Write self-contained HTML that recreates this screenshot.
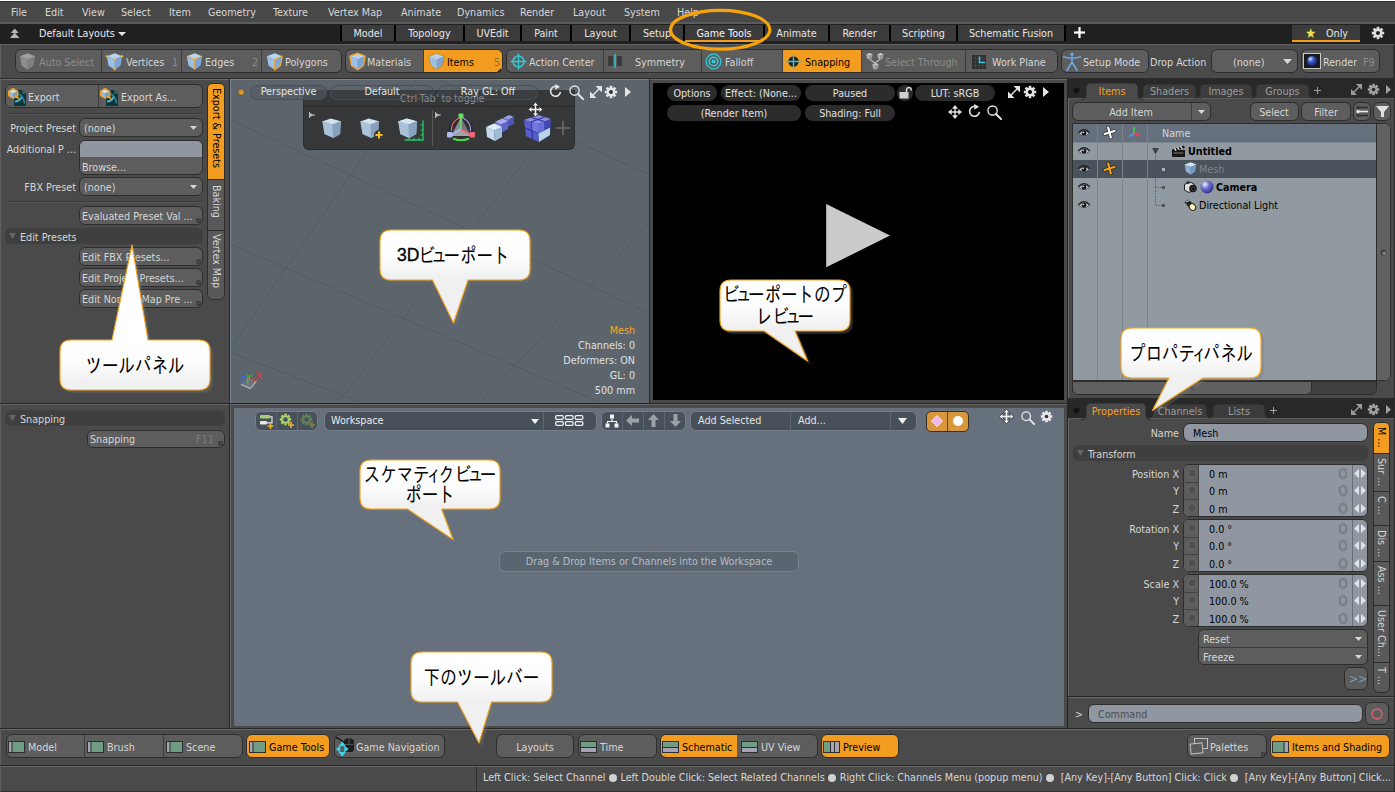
<!DOCTYPE html>
<html><head><meta charset="utf-8"><title>Modo Game Tools Layout</title>
<style>
html,body{margin:0;padding:0;background:#2b2b2b;}
body{width:1395px;height:792px;position:relative;overflow:hidden;font-family:"DejaVu Sans Condensed","Liberation Sans","Noto Sans CJK JP",sans-serif;font-size:10.7px;color:#d6d6d6;line-height:14px;}
div,span{position:absolute;box-sizing:border-box;white-space:nowrap;}
svg{position:absolute;overflow:visible;}
.t{height:14px;line-height:14px;}
.r{text-align:right;}
.c{text-align:center;}
.btn{background:#5d5d5d;border:1px solid #2d2d2d;border-radius:6px;}
.sep{width:1px;background:#3c3c3c;}
.or{background:#f29d1f;color:#000;}
.dim{color:#8c8c8c;}
.tab{top:25px;height:16px;background:#3b3b3b;color:#e6e6e6;text-align:center;line-height:18px;}
.fld{background:#9097a0;border:1px solid #2d2d2d;color:#000;}
.pill{background:rgba(84,92,98,.6);border:1px solid #485056;border-radius:7px;color:#e4e4e4;text-align:center;height:15px;line-height:12px;}
.ppill{background:#2c2c2c;border-radius:8px;color:#e0e0e0;text-align:center;height:16px;line-height:18px;}
.jp{font-family:"Liberation Sans","Noto Sans CJK JP",sans-serif;color:#000;font-size:16px;line-height:21px;text-align:center;font-weight:300;}
.co{background:linear-gradient(#ffffff 20%,#e9e9e9);border:1.5px solid #f0a21c;border-radius:10px;box-shadow:3px 3px 2px rgba(0,0,0,.35);}
</style></head><body>
<!-- MENU BAR -->
<div id="menubar" style="left:0px;top:0px;width:1395px;height:24px;background:#484848;border-top:1px solid #fff;border-bottom:2px solid #5c5c5c;"></div>
<div style="left:0px;top:1px;width:1395px;height:1px;background:#303030;"></div>
<span class="t" style="left:11px;top:6px;">File</span>
<span class="t" style="left:45px;top:6px;">Edit</span>
<span class="t" style="left:82px;top:6px;">View</span>
<span class="t" style="left:121px;top:6px;">Select</span>
<span class="t" style="left:169px;top:6px;">Item</span>
<span class="t" style="left:208px;top:6px;">Geometry</span>
<span class="t" style="left:273px;top:6px;">Texture</span>
<span class="t" style="left:328px;top:6px;">Vertex Map</span>
<span class="t" style="left:401px;top:6px;">Animate</span>
<span class="t" style="left:457px;top:6px;">Dynamics</span>
<span class="t" style="left:520px;top:6px;">Render</span>
<span class="t" style="left:573px;top:6px;">Layout</span>
<span class="t" style="left:624px;top:6px;">System</span>
<span class="t" style="left:677px;top:6px;">Help</span>
<!-- LAYOUT BAR -->
<div id="layoutbar" style="left:0px;top:24px;width:1395px;height:20px;background:#202020;"></div>
<svg style="left:10px;top:28px" width="10" height="10" viewBox="0 0 10 10"><polygon points="4.7,0.5 8.7,5 0.7,5" fill="#b4b4b4"/><polygon points="4.7,4.5 9.4,10 0,10" fill="#b4b4b4"/></svg>
<span class="t" style="left:39px;top:27px;color:#e8e8e8;">Default Layouts</span>
<svg style="left:118px;top:32px" width="8" height="4" viewBox="0 0 8 4"><polygon points="0,0 8,0 4.0,4" fill="#e8e8e8"/></svg>
<div style="left:340px;top:25px;width:726px;height:16px;background:#000;"></div>
<div class="tab" style="left:342px;top:25px;width:52px;height:16px;">Model</div>
<div class="tab" style="left:396px;top:25px;width:67px;height:16px;">Topology</div>
<div class="tab" style="left:465px;top:25px;width:55px;height:16px;">UVEdit</div>
<div class="tab" style="left:522px;top:25px;width:48px;height:16px;">Paint</div>
<div class="tab" style="left:572px;top:25px;width:57px;height:16px;">Layout</div>
<div class="tab" style="left:631px;top:25px;width:52px;height:16px;">Setup</div>
<div class="tab" style="left:685px;top:25px;width:78px;height:16px;height:17px;border-bottom:2px solid #f29d1f;color:#f4f4f4;">Game Tools</div>
<div class="tab" style="left:765px;top:25px;width:63px;height:16px;">Animate</div>
<div class="tab" style="left:830px;top:25px;width:59px;height:16px;">Render</div>
<div class="tab" style="left:891px;top:25px;width:65px;height:16px;">Scripting</div>
<div class="tab" style="left:958px;top:25px;width:106px;height:16px;">Schematic Fusion</div>
<svg style="left:1073.5px;top:27px" width="11" height="11" viewBox="0 0 11 11"><rect x="4.4" y="0" width="2.2" height="11" fill="#fff"/><rect x="0" y="4.4" width="11" height="2.2" fill="#fff"/></svg>
<div class="tab" style="left:1292px;top:25px;width:68px;height:17px;border-bottom:2px solid #f29d1f;height:17px;text-align:left;padding-left:34px;line-height:18px;">Only</div>
<span class="t" style="left:1305px;top:26px;color:#ecdf52;font-size:14px;">★</span>
<svg style="left:1371px;top:26px" width="14" height="14" viewBox="0 0 14 14"><g transform="translate(7,7)"><circle r="4.4" fill="#e0e0e0"/><rect x="-1.3" y="-6.2" width="2.6" height="3" fill="#e0e0e0" transform="rotate(0)"/><rect x="-1.3" y="-6.2" width="2.6" height="3" fill="#e0e0e0" transform="rotate(45)"/><rect x="-1.3" y="-6.2" width="2.6" height="3" fill="#e0e0e0" transform="rotate(90)"/><rect x="-1.3" y="-6.2" width="2.6" height="3" fill="#e0e0e0" transform="rotate(135)"/><rect x="-1.3" y="-6.2" width="2.6" height="3" fill="#e0e0e0" transform="rotate(180)"/><rect x="-1.3" y="-6.2" width="2.6" height="3" fill="#e0e0e0" transform="rotate(225)"/><rect x="-1.3" y="-6.2" width="2.6" height="3" fill="#e0e0e0" transform="rotate(270)"/><rect x="-1.3" y="-6.2" width="2.6" height="3" fill="#e0e0e0" transform="rotate(315)"/><circle r="1.98" fill="#1e1e1e"/></g></svg>
<!-- TOOLBAR -->
<div id="toolbar" style="left:0px;top:44px;width:1395px;height:34px;background:#4a4a4a;border-top:1px solid #626262;border-left:1px solid #5e5e5e;"></div>
<div style="left:1393px;top:45px;width:2px;height:33px;background:#333;"></div>
<div style="left:0px;top:78px;width:1395px;height:3px;background:#2c2c2c;"></div>
<div class="btn" style="left:15px;top:49px;width:327px;height:24px;"></div>
<div class="sep" style="left:101px;top:50px;width:1px;height:22px;"></div>
<div class="sep" style="left:181px;top:50px;width:1px;height:22px;"></div>
<div class="sep" style="left:261px;top:50px;width:1px;height:22px;"></div>
<svg style="left:19px;top:53px" width="17" height="17" viewBox="0 0 17 17"><g opacity="0.8"><polygon points="0.8,3.2 8.7,0.3 16.2,3.2 8.8,6.5" fill="#b0b0b0"/><polygon points="0.8,3.2 8.8,6.5 8.8,16.7 2.5,12.5" fill="#9a9a9a"/><polygon points="8.8,6.5 16.2,3.2 14.6,12.5 8.8,16.7" fill="#8a8a8a"/></g></svg>
<span class="t dim" style="left:39px;top:56px;">Auto Select</span>
<svg style="left:106px;top:53px" width="17" height="17" viewBox="0 0 17 17"><g opacity="1"><polygon points="0.8,3.2 8.7,0.3 16.2,3.2 8.8,6.5" fill="#b9d3ef"/><polygon points="0.8,3.2 8.8,6.5 8.8,16.7 2.5,12.5" fill="#9cc0ea"/><polygon points="8.8,6.5 16.2,3.2 14.6,12.5 8.8,16.7" fill="#7ba6d6"/><circle cx="0.9" cy="3.3" r="1.2" fill="#f5a623"/><circle cx="16.1" cy="3.3" r="1.2" fill="#f5a623"/><circle cx="8.8" cy="6.6" r="1.2" fill="#f5a623"/><circle cx="8.8" cy="16.3" r="1.2" fill="#f5a623"/></g></svg>
<span class="t" style="left:126px;top:56px;">Vertices</span>
<span class="t dim" style="left:172px;top:56px;">1</span>
<svg style="left:186px;top:53px" width="17" height="17" viewBox="0 0 17 17"><g opacity="1"><polygon points="0.8,3.2 8.7,0.3 16.2,3.2 8.8,6.5" fill="#b9d3ef"/><polygon points="0.8,3.2 8.8,6.5 8.8,16.7 2.5,12.5" fill="#9cc0ea"/><polygon points="8.8,6.5 16.2,3.2 14.6,12.5 8.8,16.7" fill="#7ba6d6"/><path d="M0.8,3.2 L8.8,6.5 L16.2,3.2 M8.8,6.5 L8.8,16.7" stroke="#f5a623" stroke-width="1" fill="none"/></g></svg>
<span class="t" style="left:205px;top:56px;">Edges</span>
<span class="t dim" style="left:252px;top:56px;">2</span>
<svg style="left:266px;top:53px" width="17" height="17" viewBox="0 0 17 17"><g opacity="1"><polygon points="0.8,3.2 8.7,0.3 16.2,3.2 8.8,6.5" fill="#b9d3ef"/><polygon points="0.8,3.2 8.8,6.5 8.8,16.7 2.5,12.5" fill="#9cc0ea"/><polygon points="8.8,6.5 16.2,3.2 14.6,12.5 8.8,16.7" fill="#7ba6d6"/><polygon points="8.8,6.5 16.2,3.2 14.6,12.5 8.8,16.7" fill="none" stroke="#f5a623" stroke-width="1.2"/></g></svg>
<span class="t" style="left:285px;top:56px;">Polygons</span>
<div class="btn" style="left:345px;top:49px;width:158px;height:24px;"></div>
<div class="or" style="left:424px;top:50px;width:78px;height:22px;border-radius:0 5px 5px 0;"></div>
<div class="sep" style="left:423px;top:50px;width:1px;height:22px;"></div>
<svg style="left:349px;top:53px" width="17" height="17" viewBox="0 0 17 17"><g opacity="1"><polygon points="0.8,3.2 8.7,0.3 16.2,3.2 8.8,6.5" fill="#b9d3ef"/><polygon points="0.8,3.2 8.8,6.5 8.8,16.7 2.5,12.5" fill="#9cc0ea"/><polygon points="8.8,6.5 16.2,3.2 14.6,12.5 8.8,16.7" fill="#7ba6d6"/><polygon points="0.8,3.2 8.7,0.3 16.2,3.2 14.6,12.5 8.8,16.7 2.5,12.5" fill="none" stroke="#f5a623" stroke-width="1.3"/></g></svg>
<span class="t" style="left:367px;top:56px;">Materials</span>
<svg style="left:428px;top:53px" width="17" height="17" viewBox="0 0 17 17"><g opacity="1"><polygon points="0.8,3.2 8.7,0.3 16.2,3.2 8.8,6.5" fill="#b9d3ef"/><polygon points="0.8,3.2 8.8,6.5 8.8,16.7 2.5,12.5" fill="#9cc0ea"/><polygon points="8.8,6.5 16.2,3.2 14.6,12.5 8.8,16.7" fill="#7ba6d6"/><polygon points="0.8,3.2 8.7,0.3 16.2,3.2 14.6,12.5 8.8,16.7 2.5,12.5" fill="none" stroke="#d08a1a" stroke-width="1"/></g></svg>
<span class="t" style="left:447px;top:56px;color:#000;">Items</span>
<span class="t" style="left:494px;top:56px;color:#9a6a1a;">5</span>
<svg style="left:497px;top:68px" width="4" height="4" viewBox="0 0 4 4"><polygon points="4,0 4,4 0,4" fill="#3a2a10"/></svg>
<div class="btn" style="left:506px;top:49px;width:552px;height:24px;"></div>
<div class="sep" style="left:603px;top:50px;width:1px;height:22px;"></div>
<div class="sep" style="left:701px;top:50px;width:1px;height:22px;"></div>
<div class="sep" style="left:782px;top:50px;width:1px;height:22px;"></div>
<div class="sep" style="left:861px;top:50px;width:1px;height:22px;"></div>
<div class="sep" style="left:965px;top:50px;width:1px;height:22px;"></div>
<div class="or" style="left:783px;top:50px;width:78px;height:22px;"></div>
<svg style="left:510px;top:53px" width="17" height="17" viewBox="0 0 17 17"><circle cx="8.5" cy="8.5" r="5.5" fill="none" stroke="#35c8d8" stroke-width="1.5"/><path d="M8.5,0.5V16.5M0.5,8.5H16.5" stroke="#35c8d8" stroke-width="1.3"/></svg>
<span class="t" style="left:529px;top:56px;">Action Center</span>
<svg style="left:608px;top:54px" width="16" height="14" viewBox="0 0 16 14"><rect x="0" y="2" width="5" height="10" fill="#3a3a3a"/><rect x="9" y="2" width="5" height="10" fill="#3a3a3a"/><rect x="6.3" y="0" width="1.4" height="14" fill="#35c8d8"/></svg>
<span class="t" style="left:635px;top:56px;">Symmetry</span>
<svg style="left:705px;top:53px" width="17" height="17" viewBox="0 0 17 17"><circle cx="8.5" cy="8.5" r="7.3" fill="none" stroke="#35c8d8" stroke-width="1.2"/><circle cx="8.5" cy="8.5" r="4.3" fill="none" stroke="#35c8d8" stroke-width="1.6"/><circle cx="8.5" cy="8.5" r="2" fill="#35c8d8"/></svg>
<span class="t" style="left:725px;top:56px;">Falloff</span>
<svg style="left:785px;top:53px" width="17" height="17" viewBox="0 0 17 17"><circle cx="8.5" cy="8.5" r="5.2" fill="#222"/><path d="M8.5,0.5V16.5M0.5,8.5H16.5" stroke="#35c8d8" stroke-width="1.4"/></svg>
<span class="t" style="left:805px;top:56px;color:#000;">Snapping</span>
<svg style="left:866px;top:53px" width="7" height="7" viewBox="0 0 17 17"><g opacity="1"><polygon points="0.8,3.2 8.7,0.3 16.2,3.2 8.8,6.5" fill="#d0d0d0"/><polygon points="0.8,3.2 8.8,6.5 8.8,16.7 2.5,12.5" fill="#b0b0b0"/><polygon points="8.8,6.5 16.2,3.2 14.6,12.5 8.8,16.7" fill="#989898"/></g></svg>
<svg style="left:877px;top:53px" width="7" height="7" viewBox="0 0 17 17"><g opacity="1"><polygon points="0.8,3.2 8.7,0.3 16.2,3.2 8.8,6.5" fill="#d0d0d0"/><polygon points="0.8,3.2 8.8,6.5 8.8,16.7 2.5,12.5" fill="#b0b0b0"/><polygon points="8.8,6.5 16.2,3.2 14.6,12.5 8.8,16.7" fill="#989898"/></g></svg>
<svg style="left:871.5px;top:63px" width="7" height="7" viewBox="0 0 17 17"><g opacity="1"><polygon points="0.8,3.2 8.7,0.3 16.2,3.2 8.8,6.5" fill="#d0d0d0"/><polygon points="0.8,3.2 8.8,6.5 8.8,16.7 2.5,12.5" fill="#b0b0b0"/><polygon points="8.8,6.5 16.2,3.2 14.6,12.5 8.8,16.7" fill="#989898"/></g></svg>
<svg style="left:866px;top:52px" width="19" height="18" viewBox="0 0 19 18"><path d="M4,7.5 L9,11 L14,7.5 M9,11V13" stroke="#b8b8b8" stroke-width="1.2" fill="none"/></svg>
<span class="t dim" style="left:885px;top:56px;">Select Through</span>
<svg style="left:972px;top:55px" width="14" height="14" viewBox="0 0 15 15"><rect x="0" y="0" width="15" height="15" fill="#2e2e2e"/><path d="M0,3.75H15M0,7.5H15M0,11.25H15M3.75,0V15M7.5,0V15M11.25,0V15" stroke="#4a4a4a" stroke-width=".7"/><path d="M8,1.5V8H14" stroke="#35c8d8" stroke-width="1.6" fill="none"/></svg>
<span class="t" style="left:992px;top:56px;">Work Plane</span>
<div class="btn" style="left:1061px;top:49px;width:88px;height:24px;"></div>
<svg style="left:1063px;top:52px" width="18" height="19" viewBox="0 0 18 19"><circle cx="9" cy="2.2" r="1.7" fill="#6aa8e8"/><path d="M0.5,5 L9,6.5 L17.5,5 M9,5 V10 M9,10 L4,18.5 M9,10 L14,18.5" stroke="#6aa8e8" stroke-width="1.6" fill="none" stroke-linecap="round"/></svg>
<span class="t" style="left:1083px;top:56px;">Setup Mode</span>
<span class="t" style="left:1150px;top:56px;">Drop Action</span>
<div class="btn" style="left:1211px;top:49px;width:87px;height:24px;"></div>
<span class="t" style="left:1233px;top:56px;">(none)</span>
<svg style="left:1283px;top:59px" width="9" height="5" viewBox="0 0 9 5"><polygon points="0,0 9,0 4.5,5" fill="#d8d8d8"/></svg>
<div class="btn" style="left:1301px;top:49px;width:79px;height:24px;"></div>
<svg style="left:1303px;top:53px" width="18" height="16" viewBox="0 0 18 16"><defs><radialGradient id="sph" cx=".35" cy=".3" r=".8"><stop offset="0" stop-color="#dfe8ff"/><stop offset=".35" stop-color="#3a5fd0"/><stop offset="1" stop-color="#0a1a60"/></radialGradient></defs><rect x=".5" y=".5" width="17" height="15" fill="#1a1a1a" stroke="#c8c8c8" stroke-width="1"/><circle cx="9" cy="8" r="5" fill="url(#sph)"/></svg>
<span class="t" style="left:1323px;top:56px;">Render</span>
<span class="t dim" style="left:1363px;top:56px;">F9</span>
<svg style="left:660px;top:0px" width="120" height="56" viewBox="0 0 120 56"><ellipse cx="60.2" cy="29.8" rx="49.7" ry="19.4" fill="none" stroke="#f7a30c" stroke-width="3.2"/></svg>
<!-- LEFT TOOL PANEL -->
<div id="leftpanel" style="left:0px;top:79px;width:229px;height:324px;background:#4a4a4a;border-left:1px solid #606060;border-top:1px solid #686868;"></div>
<div style="left:229px;top:79px;width:1px;height:324px;background:#262626;"></div>
<div style="left:0px;top:403px;width:1395px;height:1px;background:#262626;"></div>
<div class="btn" style="left:5px;top:84px;width:198px;height:24px;"></div>
<div class="sep" style="left:98px;top:85px;width:1px;height:22px;"></div>
<svg style="left:8px;top:86px" width="19" height="20" viewBox="0 0 19 20"><polygon points="6,4 14,4 18,8 18,20 6,20" fill="#0e343c"/><polygon points="14,4 18,8 14,8" fill="#2c5c66"/><path d="M11,8 Q16,11 16.5,17.5" stroke="#2b8896" stroke-width="1.5" fill="none"/><path d="M7,15.5 Q11.5,15.5 13.5,11" stroke="#46b4c6" stroke-width="1.9" fill="none"/><polygon points="0,5 5,1.8 10.5,5 10.5,10 5,13 0,10" fill="#f5a01e"/><polygon points="7,11.5 11.5,13.5 9.5,8.5" fill="#f5a01e"/><polygon points="1.6,5.5 5,3.8 8.9,5.5 5,7.3" fill="#d2e2f2"/><polygon points="1.6,5.5 5,7.3 5,11.4 1.6,9.5" fill="#9ab8d8"/><polygon points="5,7.3 8.9,5.5 8.9,9.5 5,11.4" fill="#7c9ec2"/></svg>
<span class="t" style="left:28px;top:91px;">Export</span>
<svg style="left:100px;top:86px" width="19" height="20" viewBox="0 0 19 20"><polygon points="6,4 14,4 18,8 18,20 6,20" fill="#0e343c"/><polygon points="14,4 18,8 14,8" fill="#2c5c66"/><path d="M11,8 Q16,11 16.5,17.5" stroke="#2b8896" stroke-width="1.5" fill="none"/><path d="M7,15.5 Q11.5,15.5 13.5,11" stroke="#46b4c6" stroke-width="1.9" fill="none"/><polygon points="0,5 5,1.8 10.5,5 10.5,10 5,13 0,10" fill="#f5a01e"/><polygon points="7,11.5 11.5,13.5 9.5,8.5" fill="#f5a01e"/><polygon points="1.6,5.5 5,3.8 8.9,5.5 5,7.3" fill="#d2e2f2"/><polygon points="1.6,5.5 5,7.3 5,11.4 1.6,9.5" fill="#9ab8d8"/><polygon points="5,7.3 8.9,5.5 8.9,9.5 5,11.4" fill="#7c9ec2"/></svg>
<span class="t" style="left:121px;top:91px;">Export As...</span>
<div style="left:9px;top:113px;width:193px;height:1px;background:#383838;"></div>
<div style="left:9px;top:114px;width:193px;height:1px;background:#565656;"></div>
<span class="t r" style="left:-124px;width:200px;top:122px;">Project Preset</span>
<div class="btn" style="left:79px;top:118px;width:124px;height:19px;"></div>
<span class="t" style="left:84px;top:122px;">(none)</span>
<svg style="left:190px;top:125.5px" width="7" height="4" viewBox="0 0 7 4"><polygon points="0,0 7,0 3.5,4" fill="#d4d4d4"/></svg>
<span class="t r" style="left:-124px;width:200px;top:143px;">Additional P ...</span>
<div class="btn" style="left:79px;top:140px;width:124px;height:35px;overflow:hidden;"><div style="left:0;top:0;width:124px;height:16px;background:#9097a0;"></div></div>
<span class="t" style="left:82px;top:161px;">Browse...</span>
<span class="t r" style="left:-124px;width:200px;top:181px;">FBX Preset</span>
<div class="btn" style="left:79px;top:177px;width:124px;height:19px;"></div>
<span class="t" style="left:84px;top:181px;">(none)</span>
<svg style="left:190px;top:184.5px" width="7" height="4" viewBox="0 0 7 4"><polygon points="0,0 7,0 3.5,4" fill="#d4d4d4"/></svg>
<div style="left:9px;top:201px;width:193px;height:1px;background:#383838;"></div>
<div style="left:9px;top:202px;width:193px;height:1px;background:#565656;"></div>
<div class="btn" style="left:79px;top:206px;width:124px;height:19px;"></div>
<span class="t" style="left:82px;top:210px;">Evaluated Preset Val ...</span>
<svg style="left:197px;top:219px" width="3" height="3" viewBox="0 0 3 3"><rect x="0" y="0" width="3" height="3" fill="none" stroke="#2a2a2a" stroke-width="1"/></svg>
<div style="left:5px;top:228px;width:198px;height:16px;background:#3f3f3f;border-radius:6px;"></div>
<svg style="left:9px;top:233px" width="7" height="6" viewBox="0 0 7 6"><polygon points="0,0 7,0 3.5,6" fill="#666"/></svg>
<span class="t" style="left:20px;top:231px;">Edit Presets</span>
<div class="btn" style="left:79px;top:247px;width:124px;height:19px;"></div>
<span class="t" style="left:82px;top:251px;">Edit FBX Presets...</span>
<svg style="left:197px;top:260px" width="3" height="3" viewBox="0 0 3 3"><rect x="0" y="0" width="3" height="3" fill="none" stroke="#2a2a2a" stroke-width="1"/></svg>
<div class="btn" style="left:79px;top:268px;width:124px;height:19px;"></div>
<span class="t" style="left:82px;top:272px;">Edit Project Presets...</span>
<svg style="left:197px;top:281px" width="3" height="3" viewBox="0 0 3 3"><rect x="0" y="0" width="3" height="3" fill="none" stroke="#2a2a2a" stroke-width="1"/></svg>
<div class="btn" style="left:79px;top:289px;width:124px;height:19px;"></div>
<span class="t" style="left:82px;top:293px;">Edit Normal Map Pre ...</span>
<svg style="left:197px;top:302px" width="3" height="3" viewBox="0 0 3 3"><rect x="0" y="0" width="3" height="3" fill="none" stroke="#2a2a2a" stroke-width="1"/></svg>
<div style="left:207px;top:83px;width:18px;height:97px;background:#f29d1f;border:1px solid #2d2d2d;border-radius:5px 5px 0 0;"></div>
<span style="left:223px;top:88px;transform-origin:0 0;transform:rotate(90deg);color:#000;height:14px;line-height:14px;">Export &amp; Presets</span>
<div style="left:207px;top:179px;width:18px;height:52px;background:#595959;border:1px solid #2d2d2d;border-radius:0;"></div>
<span style="left:223px;top:185px;transform-origin:0 0;transform:rotate(90deg);color:#d6d6d6;height:14px;line-height:14px;">Baking</span>
<div style="left:207px;top:230px;width:18px;height:70px;background:#595959;border:1px solid #2d2d2d;border-radius:0 0 6px 6px;"></div>
<span style="left:223px;top:234px;transform-origin:0 0;transform:rotate(90deg);color:#d6d6d6;height:14px;line-height:14px;">Vertex Map</span>
<!-- SNAPPING PANEL -->
<div id="snappanel" style="left:0px;top:404px;width:229px;height:324px;background:#4a4a4a;border-left:1px solid #606060;border-top:1px solid #686868;"></div>
<div style="left:229px;top:404px;width:1px;height:324px;background:#262626;"></div>
<div style="left:5px;top:410px;width:220px;height:16px;background:#3f3f3f;border-radius:6px;"></div>
<svg style="left:9px;top:415px" width="7" height="6" viewBox="0 0 7 6"><polygon points="0,0 7,0 3.5,6" fill="#666"/></svg>
<span class="t" style="left:20px;top:413px;">Snapping</span>
<div class="btn" style="left:87px;top:430px;width:138px;height:18px;"></div>
<span class="t" style="left:90px;top:433px;">Snapping</span>
<span class="t dim" style="left:196px;top:433px;color:#7a7a7a;">F11</span>
<svg style="left:219px;top:442px" width="3" height="3" viewBox="0 0 3 3"><rect x="0" y="0" width="3" height="3" fill="none" stroke="#2a2a2a" stroke-width="1"/></svg>
<!-- 3D VIEWPORT -->
<div id="view3d" style="left:230px;top:79px;width:419px;height:324px;background:#5c656c;border-left:1px solid #7a8791;border-top:1px solid #7a8791;overflow:hidden;"><svg style="left:0;top:0" width="419" height="324" viewBox="230 79 419 324"><g stroke="#525c63" stroke-width="1" fill="none"><path d="M230,119 L650,313"/><path d="M230,243.6 L603,403"/><path d="M230,351.6 L364,403"/><path d="M440,79 L650,174.6"/><path d="M230,347 L415,79"/><path d="M336,403 L586,79"/><path d="M477.5,403 L650,220.7"/><path d="M618.5,403 L650,377.5"/></g></svg></div>
<div style="left:649px;top:79px;width:3px;height:324px;background:#4a4a4a;border-left:1px solid #262626;border-right:1px solid #262626;"></div>
<svg style="left:237px;top:88px" width="8" height="8" viewBox="0 0 8 8"><defs><radialGradient id="od" cx=".6" cy=".6" r=".7"><stop offset="0" stop-color="#f5a623"/><stop offset="1" stop-color="#8a6a30"/></radialGradient></defs><circle cx="4" cy="4" r="3.5" fill="url(#od)" stroke="#4a5258" stroke-width=".8"/></svg>
<div style="left:303px;top:90px;width:272px;height:60px;background:rgba(52,52,54,.94);border-radius:0 0 6px 6px;border:1px solid #2c2c2e;border-top:none;"></div>
<div style="left:304px;top:106px;width:270px;height:1px;background:#2a2a2a;"></div>
<span class="t" style="left:400px;top:92px;color:#8f959a;">Ctrl-Tab' to toggle</span>
<div class="pill" style="left:250px;top:85px;width:77px;height:15px;">Perspective</div>
<div class="pill" style="left:330px;top:85px;width:104px;height:15px;background:rgba(90,98,104,.18);border-color:rgba(70,78,84,.8);">Default</div>
<div class="pill" style="left:438px;top:85px;width:100px;height:15px;background:rgba(90,98,104,.18);border-color:rgba(70,78,84,.8);">Ray GL: Off</div>
<svg style="left:309px;top:112px" width="6" height="6" viewBox="0 0 6 6"><rect x="0" y="0" width="1" height="6" fill="#b8b8b8"/><polygon points="1,1 5,3 1,5" fill="#b8b8b8"/><rect x="4" y="2.5" width="2" height="1" fill="#b8b8b8"/></svg>
<svg style="left:435px;top:112px" width="6" height="6" viewBox="0 0 6 6"><rect x="0" y="0" width="1" height="6" fill="#b8b8b8"/><polygon points="1,1 5,3 1,5" fill="#b8b8b8"/><rect x="4" y="2.5" width="2" height="1" fill="#b8b8b8"/></svg>
<svg style="left:322px;top:118px" width="20" height="20" viewBox="0 0 20 20"><g stroke-linejoin="round" stroke-width="1.2"><polygon points="1,3.8 8.5,1.2 18.5,3.8 11,6.8" fill="#d6e4f1" stroke="#d6e4f1"/><polygon points="1,3.8 11,6.8 11.5,19.5 3,15.8" fill="#a9c1d9" stroke="#a9c1d9"/><polygon points="11,6.8 18.5,3.8 17.7,15.8 11.5,19.5" fill="#88a2be" stroke="#88a2be"/></g></svg>
<svg style="left:360px;top:118px" width="20" height="20" viewBox="0 0 20 20"><g stroke-linejoin="round" stroke-width="1.2"><polygon points="1,3.8 8.5,1.2 18.5,3.8 11,6.8" fill="#d6e4f1" stroke="#d6e4f1"/><polygon points="1,3.8 11,6.8 11.5,19.5 3,15.8" fill="#a9c1d9" stroke="#a9c1d9"/><polygon points="11,6.8 18.5,3.8 17.7,15.8 11.5,19.5" fill="#88a2be" stroke="#88a2be"/></g></svg>
<svg style="left:398px;top:118px" width="20" height="20" viewBox="0 0 20 20"><g stroke-linejoin="round" stroke-width="1.2"><polygon points="1,3.8 8.5,1.2 18.5,3.8 11,6.8" fill="#d6e4f1" stroke="#d6e4f1"/><polygon points="1,3.8 11,6.8 11.5,19.5 3,15.8" fill="#a9c1d9" stroke="#a9c1d9"/><polygon points="11,6.8 18.5,3.8 17.7,15.8 11.5,19.5" fill="#88a2be" stroke="#88a2be"/></g></svg>
<svg style="left:374px;top:130px" width="10" height="10" viewBox="0 0 10 10"><circle cx="5" cy="5" r="5" fill="#38393b"/><path d="M5,1.5V8.5M1.5,5H8.5" stroke="#f5c020" stroke-width="2"/></svg>
<svg style="left:404px;top:120px" width="20" height="21" viewBox="0 0 20 21"><path d="M19,0.5V20H0.5" stroke="#1fd060" stroke-width="1.3" fill="none"/><path d="M16.5,5H19M16.5,10H19M16.5,15H19M5,17.5V20M10,17.5V20M15,17.5V20" stroke="#1fd060" stroke-width="1"/></svg>
<svg style="left:398px;top:118px" width="20" height="20" viewBox="0 0 20 20"><g stroke-linejoin="round" stroke-width="1.2"><polygon points="1,3.8 8.5,1.2 18.5,3.8 11,6.8" fill="#d6e4f1" stroke="#d6e4f1"/><polygon points="1,3.8 11,6.8 11.5,19.5 3,15.8" fill="#a9c1d9" stroke="#a9c1d9"/><polygon points="11,6.8 18.5,3.8 17.7,15.8 11.5,19.5" fill="#88a2be" stroke="#88a2be"/></g></svg>
<div style="left:432px;top:110px;width:1px;height:36px;background:#5a5a5a;"></div>
<svg style="left:446px;top:113px" width="30" height="30" viewBox="0 0 30 30"><circle cx="15" cy="17" r="12.5" fill="#2e2e30"/><polygon points="15,16 5,23 15,4" fill="#9a9ea4" opacity=".85"/><polygon points="15,16 25,23 15,4" fill="#7c8086" opacity=".85"/><polygon points="15,16 5,23 25,23" fill="#b4b8bc" opacity=".85"/><path d="M15,16V5" stroke="#6ae06a" stroke-width="1.6"/><rect x="12.5" y="0.5" width="5" height="5" rx="1" fill="#6ae06a"/><path d="M15,16L25,22" stroke="#f0687a" stroke-width="1.6"/><rect x="23.5" y="19" width="5.5" height="5.5" rx="1" fill="#f0687a"/><path d="M15,16L5,22" stroke="#b0b4f4" stroke-width="1.6"/><rect x="1" y="19" width="5.5" height="5.5" rx="1" fill="#b4b8f6"/><path d="M7,25.5 Q15,29 23,25.5" stroke="#4ad84a" stroke-width="2" fill="none"/><path d="M5.5,18 Q5,9 13,5" stroke="#f0687a" stroke-width="1.1" fill="none"/><path d="M24.5,18 Q25,9 17,5" stroke="#9ca4f0" stroke-width="1.1" fill="none"/></svg>
<svg style="left:485px;top:114px" width="30" height="28" viewBox="0 0 30 28"><g><polygon points="18,4 24,1 29,3 23,6" fill="#9a9ee8"/><polygon points="18,4 23,6 23,13 18,11" fill="#6a6ed0"/><polygon points="23,6 29,3 29,10 23,13" fill="#5054b8"/><polygon points="10,8 17,4.5 23,7 16,10.5" fill="#a8acf0"/><polygon points="10,8 16,10.5 16,19 10,16" fill="#7a7ed8"/><polygon points="16,10.5 23,7 23,15 16,19" fill="#6064c4"/><polygon points="1,13 9,9.5 17,13 9,16.5" fill="#dcecfa"/><polygon points="1,13 9,16.5 10,27 2,23" fill="#c4daf0"/><polygon points="9,16.5 17,13 17,23 10,27" fill="#a0bcd8"/></g></svg>
<svg style="left:524px;top:115px" width="28" height="28" viewBox="0 0 28 28"><polygon points="0,5 14,0 27,4 14,9" fill="#8a8ee4"/><polygon points="0,5 14,9 15,27 2,21" fill="#5a5ecc"/><polygon points="14,9 27,4 26,20 15,27" fill="#4448b0"/><path d="M7,2.5L20.5,6.5M20.5,2L7,7M1,13L14.5,18L26.5,12M7.5,7L8.5,24M20.5,6.5L20.5,23.5" stroke="#3034a0" stroke-width="1.2" fill="none"/><polygon points="14.5,18.5 26,12.5 26,20 15,27" fill="#b8d4ec"/><polygon points="14,9 20.5,6.5 20.5,15 14.5,18.5" fill="#6a6ed8"/><polygon points="8,7 14,9 14.5,18 8.3,15.5" fill="#7478dc"/></svg>
<svg style="left:556px;top:121px" width="14" height="14" viewBox="0 0 14 14"><path d="M7,0V14M0,7H14" stroke="#6e6e6e" stroke-width="1.6"/></svg>
<svg style="left:527.5px;top:101.5px" width="15" height="15" viewBox="0 0 14 14"><g fill="#f4f4f4" stroke="#222" stroke-width="0.7"><polygon points="7,0 10,3.7 4,3.7"/><polygon points="7,14 10,10.3 4,10.3"/><polygon points="0,7 3.7,4 3.7,10"/><polygon points="14,7 10.3,4 10.3,10"/><rect x="6.3" y="3" width="1.4" height="8" stroke="none"/><rect x="3" y="6.3" width="8" height="1.4" stroke="none"/></g></svg>
<svg style="left:548.0px;top:84.0px" width="15" height="15" viewBox="0 0 14 14"><path d="M9.8,3.2 A4.6,4.6 0 1 0 11.6,7.4" fill="none" stroke="#e4e4e4" stroke-width="1.5"/><polygon points="6.8,0 11.2,2.6 6.8,5.4" fill="#e4e4e4"/></svg>
<svg style="left:569.0px;top:84.5px" width="15" height="15" viewBox="0 0 14 14"><circle cx="5.2" cy="5.2" r="4.3" fill="none" stroke="#e4e4e4" stroke-width="1.3"/><line x1="8.4" y1="8.4" x2="13.2" y2="13.2" stroke="#e4e4e4" stroke-width="1.9" stroke-linecap="round"/></svg>
<svg style="left:590.0px;top:86.0px" width="12" height="12" viewBox="0 0 12 12"><g fill="#e4e4e4" stroke="#e4e4e4"><polygon points="12,0 12,6.5 5.5,0" stroke="none"/><polygon points="0,12 0,5.5 6.5,12" stroke="none"/><line x1="2.5" y1="9.5" x2="9.5" y2="2.5" stroke-width="1.5"/></g></svg>
<svg style="left:603.5px;top:85px" width="14" height="14" viewBox="0 0 14 14"><g transform="translate(7,7)"><circle r="4.4" fill="#e4e4e4"/><rect x="-1.3" y="-6.2" width="2.6" height="3" fill="#e4e4e4" transform="rotate(0)"/><rect x="-1.3" y="-6.2" width="2.6" height="3" fill="#e4e4e4" transform="rotate(45)"/><rect x="-1.3" y="-6.2" width="2.6" height="3" fill="#e4e4e4" transform="rotate(90)"/><rect x="-1.3" y="-6.2" width="2.6" height="3" fill="#e4e4e4" transform="rotate(135)"/><rect x="-1.3" y="-6.2" width="2.6" height="3" fill="#e4e4e4" transform="rotate(180)"/><rect x="-1.3" y="-6.2" width="2.6" height="3" fill="#e4e4e4" transform="rotate(225)"/><rect x="-1.3" y="-6.2" width="2.6" height="3" fill="#e4e4e4" transform="rotate(270)"/><rect x="-1.3" y="-6.2" width="2.6" height="3" fill="#e4e4e4" transform="rotate(315)"/><circle r="1.98" fill="#2c3238"/></g></svg>
<svg style="left:624.5px;top:87.0px" width="6" height="10" viewBox="0 0 6 10"><polygon points="0,0 6,5.0 0,10" fill="#e4e4e4"/></svg>
<span class="t r" style="left:435px;width:200px;top:324px;color:#f5a623;">Mesh</span>
<span class="t r" style="left:435px;width:200px;top:339px;color:#e0e0e0;">Channels: 0</span>
<span class="t r" style="left:435px;width:200px;top:354px;color:#e0e0e0;">Deformers: ON</span>
<span class="t r" style="left:435px;width:200px;top:369px;color:#e0e0e0;">GL: 0</span>
<span class="t r" style="left:435px;width:200px;top:384px;color:#e0e0e0;">500 mm</span>
<svg style="left:240px;top:371px" width="24" height="19" viewBox="0 0 24 19"><polygon points="1,13.5 7.5,6 16.5,10 10.5,17.5" fill="#6c757c"/><path d="M1,13.5 L10.5,17.5 L16.5,10" stroke="#cfcfcf" stroke-width="1" fill="none"/><path d="M7.5,6 L16.5,10" stroke="#f03030" stroke-width="1.2"/><path d="M7.5,5 V13.5" stroke="#20d020" stroke-width="1.2"/><path d="M7.5,6 L1,13.5" stroke="#3a6af8" stroke-width="1.2" stroke-dasharray="1.5 1"/><text x="0.5" y="11" font-size="9" fill="#3a6af8" font-family="Liberation Sans,sans-serif">Z</text><text x="6.5" y="9" font-size="9" fill="#20d020" font-family="Liberation Sans,sans-serif">Y</text><text x="15.5" y="9" font-size="10" fill="#f03030" font-family="Liberation Sans,sans-serif">X</text></svg>
<!-- PREVIEW VIEWPORT -->
<div style="left:650px;top:79px;width:418px;height:324px;background:#4a4a4a;border-top:1px solid #686868;"></div>
<div id="preview" style="left:653px;top:83px;width:411px;height:317px;background:#000;"></div>
<div class="ppill" style="left:667px;top:85px;width:50px;height:16px;">Options</div>
<div class="ppill" style="left:721px;top:85px;width:80px;height:16px;">Effect: (None...</div>
<div class="ppill" style="left:805px;top:85px;width:90px;height:16px;">Paused</div>
<div class="ppill" style="left:897px;top:85px;width:16px;height:16px;height:16px;border-radius:8px;"></div>
<svg style="left:899px;top:86px" width="13" height="13" viewBox="0 0 13 13"><path d="M7.5,6V3.5A2.5,2.5 0 0 1 12.3,3.2V4.5" stroke="#d8d8d8" stroke-width="1.5" fill="none"/><rect x="0.5" y="6" width="9" height="6.5" fill="#d0d0d0"/></svg>
<div class="ppill" style="left:915px;top:85px;width:80px;height:16px;">LUT: sRGB</div>
<div class="ppill" style="left:667px;top:105px;width:134px;height:16px;">(Render Item)</div>
<div class="ppill" style="left:805px;top:105px;width:90px;height:16px;">Shading: Full</div>
<svg style="left:1008.0px;top:86.0px" width="12" height="12" viewBox="0 0 12 12"><g fill="#e4e4e4" stroke="#e4e4e4"><polygon points="12,0 12,6.5 5.5,0" stroke="none"/><polygon points="0,12 0,5.5 6.5,12" stroke="none"/><line x1="2.5" y1="9.5" x2="9.5" y2="2.5" stroke-width="1.5"/></g></svg>
<svg style="left:1023px;top:85px" width="14" height="14" viewBox="0 0 14 14"><g transform="translate(7,7)"><circle r="4.4" fill="#e4e4e4"/><rect x="-1.3" y="-6.2" width="2.6" height="3" fill="#e4e4e4" transform="rotate(0)"/><rect x="-1.3" y="-6.2" width="2.6" height="3" fill="#e4e4e4" transform="rotate(45)"/><rect x="-1.3" y="-6.2" width="2.6" height="3" fill="#e4e4e4" transform="rotate(90)"/><rect x="-1.3" y="-6.2" width="2.6" height="3" fill="#e4e4e4" transform="rotate(135)"/><rect x="-1.3" y="-6.2" width="2.6" height="3" fill="#e4e4e4" transform="rotate(180)"/><rect x="-1.3" y="-6.2" width="2.6" height="3" fill="#e4e4e4" transform="rotate(225)"/><rect x="-1.3" y="-6.2" width="2.6" height="3" fill="#e4e4e4" transform="rotate(270)"/><rect x="-1.3" y="-6.2" width="2.6" height="3" fill="#e4e4e4" transform="rotate(315)"/><circle r="1.98" fill="#000"/></g></svg>
<svg style="left:1043.0px;top:87.0px" width="6" height="10" viewBox="0 0 6 10"><polygon points="0,0 6,5.0 0,10" fill="#e4e4e4"/></svg>
<svg style="left:947.5px;top:104.5px" width="14" height="14" viewBox="0 0 14 14"><g fill="#e4e4e4"><polygon points="7,0 10,3.7 4,3.7"/><polygon points="7,14 10,10.3 4,10.3"/><polygon points="0,7 3.7,4 3.7,10"/><polygon points="14,7 10.3,4 10.3,10"/><rect x="6.3" y="3" width="1.4" height="8" stroke="none"/><rect x="3" y="6.3" width="8" height="1.4" stroke="none"/></g></svg>
<svg style="left:967.0px;top:103.5px" width="15" height="15" viewBox="0 0 14 14"><path d="M9.8,3.2 A4.6,4.6 0 1 0 11.6,7.4" fill="none" stroke="#e4e4e4" stroke-width="1.5"/><polygon points="6.8,0 11.2,2.6 6.8,5.4" fill="#e4e4e4"/></svg>
<svg style="left:987.0px;top:104.5px" width="15" height="15" viewBox="0 0 14 14"><circle cx="5.2" cy="5.2" r="4.3" fill="none" stroke="#e4e4e4" stroke-width="1.3"/><line x1="8.4" y1="8.4" x2="13.2" y2="13.2" stroke="#e4e4e4" stroke-width="1.9" stroke-linecap="round"/></svg>
<svg style="left:826px;top:204px" width="65" height="63" viewBox="0 0 65 63"><polygon points="0.2,0 64,31.6 0.2,63.3" fill="#cbcbcb"/></svg>
<!-- ITEMS PANEL -->
<div style="left:1067px;top:79px;width:1px;height:324px;background:#262626;"></div>
<div id="rightpanel" style="left:1068px;top:79px;width:327px;height:319px;background:#4a4a4a;border-left:1px solid #686868;"></div>
<div style="left:1068px;top:79px;width:327px;height:20px;background:#282828;"></div>
<div style="left:1068px;top:98px;width:327px;height:1px;background:#5c5c5c;"></div>
<svg style="left:1073px;top:87px" width="7" height="7" viewBox="0 0 7 7"><circle cx="3.5" cy="3.5" r="3" fill="#141414"/></svg>
<svg style="left:1081px;top:83px" width="62" height="16.5" viewBox="0 0 62 16.5"><path d="M0,16.5 Q5,16.5 5,11.5 L5,5 Q5,0 10,0 L52,0 Q57,0 57,5 L57,11.5 Q57,16.5 62,16.5" fill="#4a4a4a" stroke="#2a2a2a" stroke-width="1"/></svg>
<span class="t c" style="left:962.0px;width:300px;top:85px;color:#f5a01e;">Items</span>
<svg style="left:1138px;top:84px" width="63" height="14" viewBox="0 0 63 14"><path d="M0,14 Q5,14 5,9 L5,5 Q5,0 10,0 L53,0 Q58,0 58,5 L58,9 Q58,14 63,14" fill="#3c3c3c" stroke="#2a2a2a" stroke-width="1"/></svg>
<span class="t c" style="left:1019.5px;width:300px;top:85px;color:#9c9c9c;">Shaders</span>
<svg style="left:1195px;top:84px" width="62" height="14" viewBox="0 0 62 14"><path d="M0,14 Q5,14 5,9 L5,5 Q5,0 10,0 L52,0 Q57,0 57,5 L57,9 Q57,14 62,14" fill="#3c3c3c" stroke="#2a2a2a" stroke-width="1"/></svg>
<span class="t c" style="left:1076.0px;width:300px;top:85px;color:#9c9c9c;">Images</span>
<svg style="left:1251px;top:84px" width="63" height="14" viewBox="0 0 63 14"><path d="M0,14 Q5,14 5,9 L5,5 Q5,0 10,0 L53,0 Q58,0 58,5 L58,9 Q58,14 63,14" fill="#3c3c3c" stroke="#2a2a2a" stroke-width="1"/></svg>
<span class="t c" style="left:1132.5px;width:300px;top:85px;color:#9c9c9c;">Groups</span>
<svg style="left:1313px;top:86px" width="9" height="9" viewBox="0 0 9 9"><path d="M4.5,1V8M1,4.5H8" stroke="#a0a0a0" stroke-width="1"/></svg>
<svg style="left:1351.0px;top:83.5px" width="11" height="11" viewBox="0 0 12 12"><g fill="#9c9c9c" stroke="#9c9c9c"><polygon points="12,0 12,6.5 5.5,0" stroke="none"/><polygon points="0,12 0,5.5 6.5,12" stroke="none"/><line x1="2.5" y1="9.5" x2="9.5" y2="2.5" stroke-width="1.5"/></g></svg>
<svg style="left:1367.0px;top:82.5px" width="13.0" height="13.0" viewBox="0 0 13.0 13.0"><g transform="translate(6.5,6.5)"><circle r="3.9" fill="#a0a0a0"/><rect x="-1.3" y="-5.7" width="2.6" height="3" fill="#a0a0a0" transform="rotate(0)"/><rect x="-1.3" y="-5.7" width="2.6" height="3" fill="#a0a0a0" transform="rotate(45)"/><rect x="-1.3" y="-5.7" width="2.6" height="3" fill="#a0a0a0" transform="rotate(90)"/><rect x="-1.3" y="-5.7" width="2.6" height="3" fill="#a0a0a0" transform="rotate(135)"/><rect x="-1.3" y="-5.7" width="2.6" height="3" fill="#a0a0a0" transform="rotate(180)"/><rect x="-1.3" y="-5.7" width="2.6" height="3" fill="#a0a0a0" transform="rotate(225)"/><rect x="-1.3" y="-5.7" width="2.6" height="3" fill="#a0a0a0" transform="rotate(270)"/><rect x="-1.3" y="-5.7" width="2.6" height="3" fill="#a0a0a0" transform="rotate(315)"/><circle r="1.8150000000000002" fill="#282828"/></g></svg>
<svg style="left:1385.5px;top:84.5px" width="5" height="9" viewBox="0 0 5 9"><polygon points="0,0 5,4.5 0,9" fill="#a0a0a0"/></svg>
<div class="btn" style="left:1072px;top:102px;width:139px;height:19px;"></div>
<div class="sep" style="left:1191px;top:103px;width:1px;height:17px;"></div>
<span class="t c" style="left:981px;width:300px;top:106px;">Add Item</span>
<svg style="left:1198px;top:109.5px" width="7" height="4" viewBox="0 0 7 4"><polygon points="0,0 7,0 3.5,4" fill="#d8d8d8"/></svg>
<div class="btn" style="left:1250px;top:102px;width:49px;height:19px;"></div>
<span class="t c" style="left:1124px;width:300px;top:106px;">Select</span>
<div class="btn" style="left:1301px;top:102px;width:50px;height:19px;"></div>
<span class="t c" style="left:1176px;width:300px;top:106px;">Filter</span>
<div class="btn" style="left:1353px;top:102px;width:18px;height:19px;"></div>
<svg style="left:1356px;top:106px" width="12" height="11" viewBox="0 0 12 11"><path d="M3,1.5H12M3,9.5H12" stroke="#303030" stroke-width="1.4"/><circle cx="2" cy="1.5" r="1.5" fill="#303030"/><circle cx="2" cy="9.5" r="1.5" fill="#303030"/><path d="M3,5.5H12" stroke="#e8e8e8" stroke-width="1.6"/><circle cx="2" cy="5.5" r="1.7" fill="#e8e8e8"/></svg>
<div class="btn" style="left:1373px;top:102px;width:18px;height:19px;"></div>
<svg style="left:1376px;top:106px" width="13" height="11" viewBox="0 0 13 11"><polygon points="0,0 13,0 8,6 8,11 5,11 5,6" fill="#e0e0e0"/></svg>
<div style="left:1072px;top:123px;width:319px;height:258px;background:#9199a1;border:1px solid #2d2d2d;border-radius:0 7px 7px 0;overflow:hidden;"><div style="left:0;top:0;width:303px;height:18px;background:#65707c;"></div><div style="left:0;top:36px;width:303px;height:18px;background:#4a525c;"></div><div style="left:24px;top:0;width:1px;height:258px;background:#7a828a;"></div><div style="left:49px;top:0;width:1px;height:258px;background:#7a828a;"></div><div style="left:74px;top:0;width:1px;height:258px;background:#7a828a;"></div><div style="left:0;top:18px;width:303px;height:1px;background:#7c858e;"></div><div style="left:303px;top:0;width:16px;height:258px;background:#616161;border-left:1px solid #2d2d2d;"></div></div>
<svg style="left:1379.5px;top:248.5px" width="7" height="7" viewBox="0 0 7 7"><circle cx="3.5" cy="3.5" r="3" fill="#444"/><circle cx="4.2" cy="4.2" r="1.5" fill="#8a8a8a"/></svg>
<svg style="left:1077.5px;top:128px" width="12" height="10" viewBox="0 0 12 10"><path d="M0.5,5.5 Q6,0.5 11.5,5.5 Q6,9.5 0.5,5.5Z" fill="#d4d8dc" stroke="#3a3e44" stroke-width=".7"/><circle cx="6" cy="5.2" r="2.4" fill="#15171a"/><circle cx="5.2" cy="4.4" r=".8" fill="#f0f0f0"/><path d="M0.3,4.6 Q6,-1.2 11.7,4.6" stroke="#1c1e22" stroke-width="1.3" fill="none"/></svg>
<svg style="left:1077.5px;top:146px" width="12" height="10" viewBox="0 0 12 10"><path d="M0.5,5.5 Q6,0.5 11.5,5.5 Q6,9.5 0.5,5.5Z" fill="#d4d8dc" stroke="#3a3e44" stroke-width=".7"/><circle cx="6" cy="5.2" r="2.4" fill="#15171a"/><circle cx="5.2" cy="4.4" r=".8" fill="#f0f0f0"/><path d="M0.3,4.6 Q6,-1.2 11.7,4.6" stroke="#1c1e22" stroke-width="1.3" fill="none"/></svg>
<svg style="left:1077.5px;top:164px" width="12" height="10" viewBox="0 0 12 10"><path d="M0.5,5.5 Q6,0.5 11.5,5.5 Q6,9.5 0.5,5.5Z" fill="#d4d8dc" stroke="#3a3e44" stroke-width=".7"/><circle cx="6" cy="5.2" r="2.4" fill="#15171a"/><circle cx="5.2" cy="4.4" r=".8" fill="#f0f0f0"/><path d="M0.3,4.6 Q6,-1.2 11.7,4.6" stroke="#1c1e22" stroke-width="1.3" fill="none"/></svg>
<svg style="left:1077.5px;top:182px" width="12" height="10" viewBox="0 0 12 10"><path d="M0.5,5.5 Q6,0.5 11.5,5.5 Q6,9.5 0.5,5.5Z" fill="#d4d8dc" stroke="#3a3e44" stroke-width=".7"/><circle cx="6" cy="5.2" r="2.4" fill="#15171a"/><circle cx="5.2" cy="4.4" r=".8" fill="#f0f0f0"/><path d="M0.3,4.6 Q6,-1.2 11.7,4.6" stroke="#1c1e22" stroke-width="1.3" fill="none"/></svg>
<svg style="left:1077.5px;top:200px" width="12" height="10" viewBox="0 0 12 10"><path d="M0.5,5.5 Q6,0.5 11.5,5.5 Q6,9.5 0.5,5.5Z" fill="#d4d8dc" stroke="#3a3e44" stroke-width=".7"/><circle cx="6" cy="5.2" r="2.4" fill="#15171a"/><circle cx="5.2" cy="4.4" r=".8" fill="#f0f0f0"/><path d="M0.3,4.6 Q6,-1.2 11.7,4.6" stroke="#1c1e22" stroke-width="1.3" fill="none"/></svg>
<svg style="left:1103px;top:126px" width="13" height="13" viewBox="0 0 13 13"><path d="M1.5,8L11.5,5M5.2,1.5L7.8,11.5" stroke="#2a2e34" stroke-width="3.6" stroke-linecap="round"/><path d="M1.5,8L11.5,5M5.2,1.5L7.8,11.5" stroke="#fff" stroke-width="2.2" stroke-linecap="round"/></svg>
<svg style="left:1128px;top:126px" width="13" height="13" viewBox="0 0 13 13"><path d="M6,7V1" stroke="#30d040" stroke-width="2"/><path d="M6,7L11.5,9.5" stroke="#f04050" stroke-width="2"/><path d="M6,7L1.5,10.5" stroke="#40a0f0" stroke-width="2"/></svg>
<svg style="left:1103px;top:162px" width="13" height="13" viewBox="0 0 13 13"><path d="M1.5,8L11.5,5M5.2,1.5L7.8,11.5" stroke="#2a2210" stroke-width="3.6" stroke-linecap="round"/><path d="M1.5,8L11.5,5M5.2,1.5L7.8,11.5" stroke="#f5a01e" stroke-width="2.2" stroke-linecap="round"/></svg>
<span class="t" style="left:1162px;top:127px;color:#d4d8dc;">Name</span>
<svg style="left:1152px;top:148px" width="7" height="7" viewBox="0 0 7 7"><polygon points="0,0 7,0 3.5,6.5" fill="#3c4046"/></svg>
<svg style="left:1155px;top:156px" width="12" height="52" viewBox="0 0 12 52"><path d="M0.5,0V49.5H7M0.5,13.5H7M0.5,31.5H7" stroke="#444a50" stroke-width="1" stroke-dasharray="1 1.5" fill="none"/><rect x="7" y="12" width="3" height="3" fill="#aab2ba"/><rect x="7" y="30" width="3" height="3" fill="#555"/><rect x="7" y="48" width="3" height="3" fill="#555"/></svg>
<svg style="left:1172px;top:145px" width="13" height="12" viewBox="0 0 13 12"><rect x="0.5" y="5.5" width="12" height="6" fill="#181818" stroke="#181818" stroke-width="1"/><path d="M1.5,8H11.5" stroke="#9a9a9a" stroke-width=".8"/><polygon points="0,4.5 12,0.5 12.8,3 0.8,7" fill="#181818"/><path d="M2.5,3.4L4.2,5.6M5.5,2.4L7.2,4.6M8.5,1.4L10.2,3.6" stroke="#fff" stroke-width="1.3"/></svg>
<span class="t" style="left:1188px;top:145px;color:#000;"><b style="font-weight:bold;">Untitled</b></span>
<svg style="left:1184px;top:162px" width="13" height="13" viewBox="0 0 17 17"><g opacity="1"><polygon points="0.8,3.2 8.7,0.3 16.2,3.2 8.8,6.5" fill="#d4e4f2"/><polygon points="0.8,3.2 8.8,6.5 8.8,16.7 2.5,12.5" fill="#8fb0d4"/><polygon points="8.8,6.5 16.2,3.2 14.6,12.5 8.8,16.7" fill="#7198c0"/></g></svg>
<span class="t" style="left:1199px;top:163px;color:#7c858e;">Mesh</span>
<svg style="left:1184px;top:181px" width="14" height="12" viewBox="0 0 14 12"><polygon points="0.5,3.5 6,1 10,3 10,9 5,11.5 0.5,9" fill="#e0e0e0" stroke="#222" stroke-width="1"/><rect x="2.5" y="0.5" width="3" height="2.2" fill="#222"/><circle cx="9" cy="7.5" r="3.8" fill="#1a1a1a"/><circle cx="9.3" cy="7.8" r="1.8" fill="#000" stroke="#555" stroke-width=".8"/></svg>
<svg style="left:1200px;top:180px" width="14" height="14" viewBox="0 0 14 14"><defs><radialGradient id="sp2" cx=".35" cy=".3" r=".8"><stop offset="0" stop-color="#f4f4ff"/><stop offset=".4" stop-color="#7070d0"/><stop offset="1" stop-color="#26267c"/></radialGradient></defs><circle cx="7" cy="7" r="6.5" fill="url(#sp2)"/></svg>
<span class="t" style="left:1216px;top:181px;color:#000;"><b style="font-weight:bold;">Camera</b></span>
<svg style="left:1184px;top:199px" width="14" height="12" viewBox="0 0 14 12"><polygon points="0.5,3 4.5,0.5 9.5,5.5 5.5,9" fill="#1c1c1c"/><path d="M2,3L5.5,1.5" stroke="#e8e8e8" stroke-width="1"/><ellipse cx="8.5" cy="8" rx="3" ry="3.6" transform="rotate(-35 8.5 8)" fill="#fbf6b0" stroke="#1c1c1c" stroke-width="1"/></svg>
<span class="t" style="left:1199px;top:199px;color:#000;">Directional Light</span>
<div style="left:1072px;top:381px;width:305px;height:14px;background:#404040;border:1px solid #2d2d2d;border-radius:0 0 6px 6px;"></div>
<div style="left:1072px;top:381px;width:240px;height:14px;background:#606060;border:1px solid #2d2d2d;border-radius:0 0 6px 6px;"></div>
<svg style="left:1190px;top:386px" width="5" height="5" viewBox="0 0 5 5"><circle cx="2.5" cy="2.5" r="2" fill="#4a4a4a"/></svg>
<!-- PROPERTIES PANEL -->
<div style="left:1067px;top:398px;width:328px;height:5px;background:#2a2a2a;"></div>
<div style="left:1067px;top:403px;width:1px;height:326px;background:#262626;"></div>
<div id="proppanel" style="left:1068px;top:403px;width:327px;height:294px;background:#4a4a4a;border-left:1px solid #686868;"></div>
<div style="left:1068px;top:399px;width:327px;height:20px;background:#282828;"></div>
<div style="left:1068px;top:418px;width:327px;height:1px;background:#5c5c5c;"></div>
<svg style="left:1073px;top:407px" width="7" height="7" viewBox="0 0 7 7"><circle cx="3.5" cy="3.5" r="3" fill="#141414"/></svg>
<svg style="left:1081px;top:403px" width="70" height="16.5" viewBox="0 0 70 16.5"><path d="M0,16.5 Q5,16.5 5,11.5 L5,5 Q5,0 10,0 L60,0 Q65,0 65,5 L65,11.5 Q65,16.5 70,16.5" fill="#4a4a4a" stroke="#2a2a2a" stroke-width="1"/></svg>
<span class="t c" style="left:966.0px;width:300px;top:405px;color:#f5a01e;">Properties</span>
<svg style="left:1148px;top:404px" width="64" height="14" viewBox="0 0 64 14"><path d="M0,14 Q5,14 5,9 L5,5 Q5,0 10,0 L54,0 Q59,0 59,5 L59,9 Q59,14 64,14" fill="#3c3c3c" stroke="#2a2a2a" stroke-width="1"/></svg>
<span class="t c" style="left:1030.0px;width:300px;top:405px;color:#9c9c9c;">Channels</span>
<svg style="left:1208px;top:404px" width="62" height="14" viewBox="0 0 62 14"><path d="M0,14 Q5,14 5,9 L5,5 Q5,0 10,0 L52,0 Q57,0 57,5 L57,9 Q57,14 62,14" fill="#3c3c3c" stroke="#2a2a2a" stroke-width="1"/></svg>
<span class="t c" style="left:1089.0px;width:300px;top:405px;color:#9c9c9c;">Lists</span>
<svg style="left:1269px;top:406px" width="9" height="9" viewBox="0 0 9 9"><path d="M4.5,1V8M1,4.5H8" stroke="#a0a0a0" stroke-width="1"/></svg>
<svg style="left:1351.0px;top:403.5px" width="11" height="11" viewBox="0 0 12 12"><g fill="#9c9c9c" stroke="#9c9c9c"><polygon points="12,0 12,6.5 5.5,0" stroke="none"/><polygon points="0,12 0,5.5 6.5,12" stroke="none"/><line x1="2.5" y1="9.5" x2="9.5" y2="2.5" stroke-width="1.5"/></g></svg>
<svg style="left:1367.0px;top:402.5px" width="13.0" height="13.0" viewBox="0 0 13.0 13.0"><g transform="translate(6.5,6.5)"><circle r="3.9" fill="#a0a0a0"/><rect x="-1.3" y="-5.7" width="2.6" height="3" fill="#a0a0a0" transform="rotate(0)"/><rect x="-1.3" y="-5.7" width="2.6" height="3" fill="#a0a0a0" transform="rotate(45)"/><rect x="-1.3" y="-5.7" width="2.6" height="3" fill="#a0a0a0" transform="rotate(90)"/><rect x="-1.3" y="-5.7" width="2.6" height="3" fill="#a0a0a0" transform="rotate(135)"/><rect x="-1.3" y="-5.7" width="2.6" height="3" fill="#a0a0a0" transform="rotate(180)"/><rect x="-1.3" y="-5.7" width="2.6" height="3" fill="#a0a0a0" transform="rotate(225)"/><rect x="-1.3" y="-5.7" width="2.6" height="3" fill="#a0a0a0" transform="rotate(270)"/><rect x="-1.3" y="-5.7" width="2.6" height="3" fill="#a0a0a0" transform="rotate(315)"/><circle r="1.8150000000000002" fill="#282828"/></g></svg>
<svg style="left:1385.5px;top:404.5px" width="5" height="9" viewBox="0 0 5 9"><polygon points="0,0 5,4.5 0,9" fill="#a0a0a0"/></svg>
<span class="t r" style="left:979px;width:200px;top:427px;">Name</span>
<div class="fld" style="left:1183px;top:423px;width:185px;height:19px;border-radius:7px;"></div>
<span class="t" style="left:1193px;top:427px;color:#000;">Mesh</span>
<div style="left:1073px;top:445px;width:295px;height:16px;background:#3f3f3f;border-radius:6px;"></div>
<svg style="left:1077px;top:450px" width="7" height="6" viewBox="0 0 7 6"><polygon points="0,0 7,0 3.5,6" fill="#666"/></svg>
<span class="t" style="left:1088px;top:448px;">Transform</span>
<div class="btn" style="left:1183px;top:464px;width:185px;height:53px;background:#9097a0;overflow:hidden;border-radius:6px;"><div style="left:0;top:0;width:15px;height:53px;background:#5c5c5c;border-right:1px solid #444;"></div><div style="left:168px;top:0;width:1px;height:53px;background:#6a7078;"></div><div style="left:0;top:17px;width:15px;height:1px;background:#444;"></div><div style="left:0;top:34px;width:15px;height:1px;background:#444;"></div></div>
<span class="t r" style="left:979px;width:200px;top:468.0px;">Position X</span>
<svg style="left:1187px;top:468.0px" width="10" height="10" viewBox="0 0 10 10"><circle cx="5" cy="5" r="4.2" fill="#505050" stroke="#6e6e6e" stroke-width="1"/></svg>
<span class="t" style="left:1209px;top:468.0px;color:#000;">0 m</span>
<svg style="left:1338px;top:468.0px" width="10" height="11" viewBox="0 0 10 11"><ellipse cx="5" cy="5.5" rx="3.4" ry="4.6" fill="none" stroke="#7c828a" stroke-width="2.6"/></svg>
<svg style="left:1354px;top:469.0px" width="12" height="9" viewBox="0 0 12 9"><polygon points="0,4.5 5,0 5,9" fill="#e0e4e8"/><polygon points="12,4.5 7,0 7,9" fill="#e0e4e8"/></svg>
<span class="t r" style="left:979px;width:200px;top:485.3px;">Y</span>
<svg style="left:1187px;top:485.3px" width="10" height="10" viewBox="0 0 10 10"><circle cx="5" cy="5" r="4.2" fill="#505050" stroke="#6e6e6e" stroke-width="1"/></svg>
<span class="t" style="left:1209px;top:485.3px;color:#000;">0 m</span>
<svg style="left:1338px;top:485.3px" width="10" height="11" viewBox="0 0 10 11"><ellipse cx="5" cy="5.5" rx="3.4" ry="4.6" fill="none" stroke="#7c828a" stroke-width="2.6"/></svg>
<svg style="left:1354px;top:486.3px" width="12" height="9" viewBox="0 0 12 9"><polygon points="0,4.5 5,0 5,9" fill="#e0e4e8"/><polygon points="12,4.5 7,0 7,9" fill="#e0e4e8"/></svg>
<span class="t r" style="left:979px;width:200px;top:502.6px;">Z</span>
<svg style="left:1187px;top:502.6px" width="10" height="10" viewBox="0 0 10 10"><circle cx="5" cy="5" r="4.2" fill="#505050" stroke="#6e6e6e" stroke-width="1"/></svg>
<span class="t" style="left:1209px;top:502.6px;color:#000;">0 m</span>
<svg style="left:1338px;top:502.6px" width="10" height="11" viewBox="0 0 10 11"><ellipse cx="5" cy="5.5" rx="3.4" ry="4.6" fill="none" stroke="#7c828a" stroke-width="2.6"/></svg>
<svg style="left:1354px;top:503.6px" width="12" height="9" viewBox="0 0 12 9"><polygon points="0,4.5 5,0 5,9" fill="#e0e4e8"/><polygon points="12,4.5 7,0 7,9" fill="#e0e4e8"/></svg>
<div class="btn" style="left:1183px;top:519px;width:185px;height:53px;background:#9097a0;overflow:hidden;border-radius:6px;"><div style="left:0;top:0;width:15px;height:53px;background:#5c5c5c;border-right:1px solid #444;"></div><div style="left:168px;top:0;width:1px;height:53px;background:#6a7078;"></div><div style="left:0;top:17px;width:15px;height:1px;background:#444;"></div><div style="left:0;top:34px;width:15px;height:1px;background:#444;"></div></div>
<span class="t r" style="left:979px;width:200px;top:523.0px;">Rotation X</span>
<svg style="left:1187px;top:523.0px" width="10" height="10" viewBox="0 0 10 10"><circle cx="5" cy="5" r="4.2" fill="#505050" stroke="#6e6e6e" stroke-width="1"/></svg>
<span class="t" style="left:1209px;top:523.0px;color:#000;">0.0 °</span>
<svg style="left:1338px;top:523.0px" width="10" height="11" viewBox="0 0 10 11"><ellipse cx="5" cy="5.5" rx="3.4" ry="4.6" fill="none" stroke="#7c828a" stroke-width="2.6"/></svg>
<svg style="left:1354px;top:524.0px" width="12" height="9" viewBox="0 0 12 9"><polygon points="0,4.5 5,0 5,9" fill="#e0e4e8"/><polygon points="12,4.5 7,0 7,9" fill="#e0e4e8"/></svg>
<span class="t r" style="left:979px;width:200px;top:540.3px;">Y</span>
<svg style="left:1187px;top:540.3px" width="10" height="10" viewBox="0 0 10 10"><circle cx="5" cy="5" r="4.2" fill="#505050" stroke="#6e6e6e" stroke-width="1"/></svg>
<span class="t" style="left:1209px;top:540.3px;color:#000;">0.0 °</span>
<svg style="left:1338px;top:540.3px" width="10" height="11" viewBox="0 0 10 11"><ellipse cx="5" cy="5.5" rx="3.4" ry="4.6" fill="none" stroke="#7c828a" stroke-width="2.6"/></svg>
<svg style="left:1354px;top:541.3px" width="12" height="9" viewBox="0 0 12 9"><polygon points="0,4.5 5,0 5,9" fill="#e0e4e8"/><polygon points="12,4.5 7,0 7,9" fill="#e0e4e8"/></svg>
<span class="t r" style="left:979px;width:200px;top:557.6px;">Z</span>
<svg style="left:1187px;top:557.6px" width="10" height="10" viewBox="0 0 10 10"><circle cx="5" cy="5" r="4.2" fill="#505050" stroke="#6e6e6e" stroke-width="1"/></svg>
<span class="t" style="left:1209px;top:557.6px;color:#000;">0.0 °</span>
<svg style="left:1338px;top:557.6px" width="10" height="11" viewBox="0 0 10 11"><ellipse cx="5" cy="5.5" rx="3.4" ry="4.6" fill="none" stroke="#7c828a" stroke-width="2.6"/></svg>
<svg style="left:1354px;top:558.6px" width="12" height="9" viewBox="0 0 12 9"><polygon points="0,4.5 5,0 5,9" fill="#e0e4e8"/><polygon points="12,4.5 7,0 7,9" fill="#e0e4e8"/></svg>
<div class="btn" style="left:1183px;top:574px;width:185px;height:53px;background:#9097a0;overflow:hidden;border-radius:6px;"><div style="left:0;top:0;width:15px;height:53px;background:#5c5c5c;border-right:1px solid #444;"></div><div style="left:168px;top:0;width:1px;height:53px;background:#6a7078;"></div><div style="left:0;top:17px;width:15px;height:1px;background:#444;"></div><div style="left:0;top:34px;width:15px;height:1px;background:#444;"></div></div>
<span class="t r" style="left:979px;width:200px;top:578.0px;">Scale X</span>
<svg style="left:1187px;top:578.0px" width="10" height="10" viewBox="0 0 10 10"><circle cx="5" cy="5" r="4.2" fill="#505050" stroke="#6e6e6e" stroke-width="1"/></svg>
<span class="t" style="left:1209px;top:578.0px;color:#000;">100.0 %</span>
<svg style="left:1338px;top:578.0px" width="10" height="11" viewBox="0 0 10 11"><ellipse cx="5" cy="5.5" rx="3.4" ry="4.6" fill="none" stroke="#7c828a" stroke-width="2.6"/></svg>
<svg style="left:1354px;top:579.0px" width="12" height="9" viewBox="0 0 12 9"><polygon points="0,4.5 5,0 5,9" fill="#e0e4e8"/><polygon points="12,4.5 7,0 7,9" fill="#e0e4e8"/></svg>
<span class="t r" style="left:979px;width:200px;top:595.3px;">Y</span>
<svg style="left:1187px;top:595.3px" width="10" height="10" viewBox="0 0 10 10"><circle cx="5" cy="5" r="4.2" fill="#505050" stroke="#6e6e6e" stroke-width="1"/></svg>
<span class="t" style="left:1209px;top:595.3px;color:#000;">100.0 %</span>
<svg style="left:1338px;top:595.3px" width="10" height="11" viewBox="0 0 10 11"><ellipse cx="5" cy="5.5" rx="3.4" ry="4.6" fill="none" stroke="#7c828a" stroke-width="2.6"/></svg>
<svg style="left:1354px;top:596.3px" width="12" height="9" viewBox="0 0 12 9"><polygon points="0,4.5 5,0 5,9" fill="#e0e4e8"/><polygon points="12,4.5 7,0 7,9" fill="#e0e4e8"/></svg>
<span class="t r" style="left:979px;width:200px;top:612.6px;">Z</span>
<svg style="left:1187px;top:612.6px" width="10" height="10" viewBox="0 0 10 10"><circle cx="5" cy="5" r="4.2" fill="#505050" stroke="#6e6e6e" stroke-width="1"/></svg>
<span class="t" style="left:1209px;top:612.6px;color:#000;">100.0 %</span>
<svg style="left:1338px;top:612.6px" width="10" height="11" viewBox="0 0 10 11"><ellipse cx="5" cy="5.5" rx="3.4" ry="4.6" fill="none" stroke="#7c828a" stroke-width="2.6"/></svg>
<svg style="left:1354px;top:613.6px" width="12" height="9" viewBox="0 0 12 9"><polygon points="0,4.5 5,0 5,9" fill="#e0e4e8"/><polygon points="12,4.5 7,0 7,9" fill="#e0e4e8"/></svg>
<div class="btn" style="left:1198px;top:629px;width:170px;height:36px;"></div>
<div class="sep" style="left:1199px;top:647px;width:168px;height:1px;"></div>
<span class="t" style="left:1203px;top:633px;">Reset</span>
<svg style="left:1355px;top:637px" width="7" height="4" viewBox="0 0 7 4"><polygon points="0,0 7,0 3.5,4" fill="#d8d8d8"/></svg>
<span class="t" style="left:1203px;top:651px;">Freeze</span>
<svg style="left:1355px;top:655px" width="7" height="4" viewBox="0 0 7 4"><polygon points="0,0 7,0 3.5,4" fill="#d8d8d8"/></svg>
<div class="btn" style="left:1344px;top:667px;width:24px;height:23px;"></div>
<span class="t" style="left:1349px;top:672px;color:#7aa0b8;font-size:12px;">&gt;&gt;</span>
<div style="left:1373px;top:422px;width:17px;height:32px;background:#f29d1f;border:1px solid #2d2d2d;border-radius:5px 5px 0 0;"></div>
<span style="left:1388px;top:427px;transform-origin:0 0;transform:rotate(90deg);color:#000;height:14px;line-height:14px;">M ...</span>
<div style="left:1373px;top:453px;width:17px;height:39px;background:#595959;border:1px solid #2d2d2d;border-radius:0;"></div>
<span style="left:1388px;top:458px;transform-origin:0 0;transform:rotate(90deg);color:#d6d6d6;height:14px;line-height:14px;">Sur ...</span>
<div style="left:1373px;top:491px;width:17px;height:35px;background:#595959;border:1px solid #2d2d2d;border-radius:0;"></div>
<span style="left:1388px;top:496px;transform-origin:0 0;transform:rotate(90deg);color:#d6d6d6;height:14px;line-height:14px;">C ...</span>
<div style="left:1373px;top:525px;width:17px;height:37px;background:#595959;border:1px solid #2d2d2d;border-radius:0;"></div>
<span style="left:1388px;top:530px;transform-origin:0 0;transform:rotate(90deg);color:#d6d6d6;height:14px;line-height:14px;">Dis ...</span>
<div style="left:1373px;top:561px;width:17px;height:45px;background:#595959;border:1px solid #2d2d2d;border-radius:0;"></div>
<span style="left:1388px;top:566px;transform-origin:0 0;transform:rotate(90deg);color:#d6d6d6;height:14px;line-height:14px;">Ass ...</span>
<div style="left:1373px;top:605px;width:17px;height:58px;background:#595959;border:1px solid #2d2d2d;border-radius:0;"></div>
<span style="left:1388px;top:610px;transform-origin:0 0;transform:rotate(90deg);color:#d6d6d6;height:14px;line-height:14px;">User Ch...</span>
<div style="left:1373px;top:662px;width:17px;height:31px;background:#595959;border:1px solid #2d2d2d;border-radius:0 0 6px 6px;"></div>
<span style="left:1388px;top:667px;transform-origin:0 0;transform:rotate(90deg);color:#d6d6d6;height:14px;line-height:14px;">T ...</span>
<div style="left:1067px;top:696px;width:328px;height:1px;background:#262626;"></div>
<div style="left:1068px;top:697px;width:327px;height:32px;background:#4a4a4a;border-top:1px solid #686868;"></div>
<span class="t" style="left:1075px;top:708px;">&gt;</span>
<div class="fld" style="left:1088px;top:704px;width:275px;height:19px;border-radius:6px;"></div>
<span class="t" style="left:1098px;top:708px;color:#4a4e54;">Command</span>
<div class="btn" style="left:1365px;top:702px;width:24px;height:23px;"></div>
<svg style="left:1371px;top:708px" width="12" height="12" viewBox="0 0 12 12"><circle cx="6" cy="6" r="5" fill="none" stroke="#e06074" stroke-width="1.3"/></svg>
<!-- SCHEMATIC VIEWPORT -->
<div style="left:230px;top:404px;width:837px;height:324px;background:#4a4a4a;border-top:1px solid #686868;border-left:1px solid #686868;"></div>
<div id="schematic" style="left:234px;top:408px;width:830px;height:318px;background:#66717d;"></div>
<div style="left:255px;top:411px;width:63px;height:20px;background:#48505a;border:1px solid #737e8a;border-radius:6px;"></div>
<div style="left:276px;top:412px;width:1px;height:18px;background:#5e6874;"></div>
<div style="left:297px;top:412px;width:1px;height:18px;background:#5e6874;"></div>
<svg style="left:259px;top:414px" width="15" height="15" viewBox="0 0 15 15"><rect x="1" y="1" width="10" height="3.5" rx="1" fill="#a8d070"/><rect x="1" y="7" width="7" height="3.5" rx="1" fill="#e8e8e8"/><path d="M11,2.8 H13 V8.8 H8" stroke="#e8e8e8" stroke-width="1.2" fill="none"/><path d="M11.5,9V15M8.5,12H14.5" stroke="#f0b030" stroke-width="1.6"/></svg>
<svg style="left:279.0px;top:413.0px" width="13.0" height="13.0" viewBox="0 0 13.0 13.0"><g transform="translate(6.5,6.5)"><circle r="3.9" fill="#a8d070"/><rect x="-1.3" y="-5.7" width="2.6" height="3" fill="#a8d070" transform="rotate(0)"/><rect x="-1.3" y="-5.7" width="2.6" height="3" fill="#a8d070" transform="rotate(45)"/><rect x="-1.3" y="-5.7" width="2.6" height="3" fill="#a8d070" transform="rotate(90)"/><rect x="-1.3" y="-5.7" width="2.6" height="3" fill="#a8d070" transform="rotate(135)"/><rect x="-1.3" y="-5.7" width="2.6" height="3" fill="#a8d070" transform="rotate(180)"/><rect x="-1.3" y="-5.7" width="2.6" height="3" fill="#a8d070" transform="rotate(225)"/><rect x="-1.3" y="-5.7" width="2.6" height="3" fill="#a8d070" transform="rotate(270)"/><rect x="-1.3" y="-5.7" width="2.6" height="3" fill="#a8d070" transform="rotate(315)"/><circle r="2.31" fill="#48505a"/></g></svg>
<svg style="left:287px;top:421px" width="8" height="8" viewBox="0 0 8 8"><path d="M4,1V7M1,4H7" stroke="#f0b030" stroke-width="1.6"/></svg>
<svg style="left:300.0px;top:413.0px" width="13.0" height="13.0" viewBox="0 0 13.0 13.0"><g transform="translate(6.5,6.5)"><circle r="3.9" fill="#64805a"/><rect x="-1.3" y="-5.7" width="2.6" height="3" fill="#64805a" transform="rotate(0)"/><rect x="-1.3" y="-5.7" width="2.6" height="3" fill="#64805a" transform="rotate(45)"/><rect x="-1.3" y="-5.7" width="2.6" height="3" fill="#64805a" transform="rotate(90)"/><rect x="-1.3" y="-5.7" width="2.6" height="3" fill="#64805a" transform="rotate(135)"/><rect x="-1.3" y="-5.7" width="2.6" height="3" fill="#64805a" transform="rotate(180)"/><rect x="-1.3" y="-5.7" width="2.6" height="3" fill="#64805a" transform="rotate(225)"/><rect x="-1.3" y="-5.7" width="2.6" height="3" fill="#64805a" transform="rotate(270)"/><rect x="-1.3" y="-5.7" width="2.6" height="3" fill="#64805a" transform="rotate(315)"/><circle r="2.31" fill="#48505a"/></g></svg>
<svg style="left:308px;top:421px" width="8" height="8" viewBox="0 0 8 8"><path d="M4,1V7M1,4H7" stroke="#8a7a40" stroke-width="1.6"/></svg>
<div style="left:324px;top:411px;width:273px;height:20px;background:#48505a;border:1px solid #737e8a;border-radius:6px;"></div>
<div style="left:543px;top:412px;width:1px;height:18px;background:#5e6874;"></div>
<span class="t" style="left:331px;top:414px;color:#ececec;">Workspace</span>
<svg style="left:530.5px;top:418.5px" width="8" height="5" viewBox="0 0 8 5"><polygon points="0,0 8,0 4.0,5" fill="#f0f0f0"/></svg>
<svg style="left:555px;top:415px" width="29" height="11" viewBox="0 0 29 11"><rect x="0.7" y="0.7" width="7.5" height="3.6" rx="1" fill="none" stroke="#f0f0f0" stroke-width="1.3"/><rect x="0.7" y="6.7" width="7.5" height="3.6" rx="1" fill="none" stroke="#f0f0f0" stroke-width="1.3"/><rect x="10.5" y="0.7" width="7.5" height="3.6" rx="1" fill="none" stroke="#f0f0f0" stroke-width="1.3"/><rect x="10.5" y="6.7" width="7.5" height="3.6" rx="1" fill="none" stroke="#f0f0f0" stroke-width="1.3"/><rect x="20.3" y="0.7" width="7.5" height="3.6" rx="1" fill="none" stroke="#f0f0f0" stroke-width="1.3"/><rect x="20.3" y="6.7" width="7.5" height="3.6" rx="1" fill="none" stroke="#f0f0f0" stroke-width="1.3"/></svg>
<div style="left:601px;top:411px;width:85px;height:20px;background:#48505a;border:1px solid #737e8a;border-radius:6px;"></div>
<div style="left:622px;top:412px;width:1px;height:18px;background:#5e6874;"></div>
<div style="left:643px;top:412px;width:1px;height:18px;background:#5e6874;"></div>
<div style="left:664px;top:412px;width:1px;height:18px;background:#5e6874;"></div>
<svg style="left:605px;top:414px" width="14" height="14" viewBox="0 0 14 14"><rect x="5" y="0.5" width="4" height="4" fill="#f4f4f4"/><rect x="0.5" y="9.5" width="4" height="4" fill="#f4f4f4"/><rect x="9.5" y="9.5" width="4" height="4" fill="#f4f4f4"/><path d="M7,4.5V7.5M2.5,9.5V7.5H11.5V9.5" stroke="#f4f4f4" stroke-width="1.2" fill="none"/></svg>
<svg style="left:626px;top:415px" width="13" height="11" viewBox="0 0 13 11"><polygon points="0,5.5 6,0 6,3.5 13,3.5 13,7.5 6,7.5 6,11" fill="#9aa0a6"/></svg>
<svg style="left:648px;top:414px" width="11" height="13" viewBox="0 0 11 13"><polygon points="5.5,0 11,6 7.5,6 7.5,13 3.5,13 3.5,6 0,6" fill="#9aa0a6"/></svg>
<svg style="left:670px;top:414px" width="11" height="13" viewBox="0 0 11 13"><polygon points="5.5,13 11,7 7.5,7 7.5,0 3.5,0 3.5,7 0,7" fill="#9aa0a6"/></svg>
<div style="left:690px;top:411px;width:227px;height:20px;background:#48505a;border:1px solid #737e8a;border-radius:6px;"></div>
<div style="left:790px;top:412px;width:1px;height:18px;background:#5e6874;"></div>
<div style="left:890px;top:412px;width:1px;height:18px;background:#5e6874;"></div>
<span class="t" style="left:698px;top:414px;color:#e4e4e4;">Add Selected</span>
<span class="t" style="left:798px;top:414px;color:#e4e4e4;">Add...</span>
<svg style="left:898px;top:418px" width="9" height="6" viewBox="0 0 9 6"><polygon points="0,0 9,0 4.5,6" fill="#f0f0f0"/></svg>
<div style="left:926px;top:411px;width:43px;height:21px;background:#d9973c;border:1px solid #3a3020;border-radius:5px;"></div>
<div style="left:947px;top:412px;width:1px;height:19px;background:#5a4420;"></div>
<svg style="left:931px;top:415px" width="12" height="12" viewBox="0 0 12 12"><polygon points="6,0.5 11.5,6 6,11.5 0.5,6" fill="#f4b4f0" stroke="#fff" stroke-width=".8"/></svg>
<svg style="left:952px;top:415px" width="12" height="12" viewBox="0 0 12 12"><circle cx="6" cy="6" r="5" fill="#fff"/></svg>
<svg style="left:999.0px;top:409.0px" width="15" height="15" viewBox="0 0 14 14"><g fill="#f0f0f0" stroke="#2a3038" stroke-width="0.7"><polygon points="7,0 10,3.7 4,3.7"/><polygon points="7,14 10,10.3 4,10.3"/><polygon points="0,7 3.7,4 3.7,10"/><polygon points="14,7 10.3,4 10.3,10"/><rect x="6.3" y="3" width="1.4" height="8" stroke="none"/><rect x="3" y="6.3" width="8" height="1.4" stroke="none"/></g></svg>
<svg style="left:1021.0px;top:410.5px" width="14" height="14" viewBox="0 0 14 14"><circle cx="5.2" cy="5.2" r="4.3" fill="none" stroke="#e8e8e8" stroke-width="1.3"/><line x1="8.4" y1="8.4" x2="13.2" y2="13.2" stroke="#e8e8e8" stroke-width="1.9" stroke-linecap="round"/></svg>
<svg style="left:1039.5px;top:410.0px" width="13.0" height="13.0" viewBox="0 0 13.0 13.0"><g transform="translate(6.5,6.5)"><circle r="3.9" fill="#e8e8e8"/><rect x="-1.3" y="-5.7" width="2.6" height="3" fill="#e8e8e8" transform="rotate(0)"/><rect x="-1.3" y="-5.7" width="2.6" height="3" fill="#e8e8e8" transform="rotate(45)"/><rect x="-1.3" y="-5.7" width="2.6" height="3" fill="#e8e8e8" transform="rotate(90)"/><rect x="-1.3" y="-5.7" width="2.6" height="3" fill="#e8e8e8" transform="rotate(135)"/><rect x="-1.3" y="-5.7" width="2.6" height="3" fill="#e8e8e8" transform="rotate(180)"/><rect x="-1.3" y="-5.7" width="2.6" height="3" fill="#e8e8e8" transform="rotate(225)"/><rect x="-1.3" y="-5.7" width="2.6" height="3" fill="#e8e8e8" transform="rotate(270)"/><rect x="-1.3" y="-5.7" width="2.6" height="3" fill="#e8e8e8" transform="rotate(315)"/><circle r="1.8150000000000002" fill="#2c333b"/></g></svg>
<div style="left:499px;top:551px;width:300px;height:21px;background:#5b6570;border:1px solid #76828e;border-radius:6px;color:#b4bcc4;text-align:center;line-height:20px;">Drag &amp; Drop Items or Channels into the Workspace</div>
<!-- BOTTOM BAR -->
<div style="left:0px;top:728px;width:1395px;height:2px;background:#262626;"></div>
<div id="bottombar" style="left:0px;top:729px;width:1395px;height:36px;background:#4a4a4a;border-top:1px solid #686868;border-left:1px solid #606060;"></div>
<div style="left:0px;top:765px;width:1395px;height:1px;background:#262626;"></div>
<div id="statusbar" style="left:0px;top:766px;width:1395px;height:26px;background:#4a4a4a;border-top:1px solid #686868;border-bottom:1px solid #333;border-left:1px solid #606060;"></div>
<div style="left:1394px;top:44px;width:1px;height:748px;background:#2c2c2c;"></div>
<div class="btn" style="left:6px;top:734px;width:237px;height:24px;"></div>
<div class="sep" style="left:84px;top:735px;width:1px;height:22px;"></div>
<div class="sep" style="left:163px;top:735px;width:1px;height:22px;"></div>
<svg style="left:8px;top:741px" width="17" height="12" viewBox="0 0 17 12"><rect x=".5" y=".5" width="16" height="11" fill="#6f9c83" stroke="#2e2e2e"/><rect x="1" y="1" width="2.5" height="10" fill="#a4a4b4"/><rect x="3.5" y="1" width="1" height="10" fill="#2e2e2e"/></svg>
<span class="t" style="left:28px;top:741px;">Model</span>
<svg style="left:87px;top:741px" width="17" height="12" viewBox="0 0 17 12"><rect x=".5" y=".5" width="16" height="11" fill="#6f9c83" stroke="#2e2e2e"/><rect x="1" y="1" width="2.5" height="10" fill="#a4a4b4"/><rect x="3.5" y="1" width="1" height="10" fill="#2e2e2e"/></svg>
<span class="t" style="left:107px;top:741px;">Brush</span>
<svg style="left:166px;top:741px" width="17" height="12" viewBox="0 0 17 12"><rect x=".5" y=".5" width="16" height="11" fill="#6f9c83" stroke="#2e2e2e"/><rect x="1" y="1" width="2.5" height="10" fill="#a4a4b4"/><rect x="3.5" y="1" width="1" height="10" fill="#2e2e2e"/></svg>
<span class="t" style="left:186px;top:741px;">Scene</span>
<div class="btn or" style="left:246px;top:734px;width:84px;height:24px;"></div>
<svg style="left:249px;top:741px" width="17" height="12" viewBox="0 0 17 12"><rect x=".5" y=".5" width="16" height="11" fill="#6f9c83" stroke="#2e2e2e"/><rect x="1" y="1" width="2.5" height="10" fill="#a4a4b4"/><rect x="3.5" y="1" width="1" height="10" fill="#2e2e2e"/></svg>
<span class="t" style="left:269px;top:741px;color:#000;">Game Tools</span>
<div class="btn" style="left:334px;top:734px;width:111px;height:24px;"></div>
<svg style="left:335px;top:737px" width="20" height="20" viewBox="0 0 20 20"><path d="M1,0.5 C5,1 6,4 9,5.5" stroke="#161616" stroke-width="1.3" fill="none"/><rect x="9" y="1.5" width="10" height="13.5" rx="3.5" fill="#1e1e1e"/><path d="M14,2V7.5M9.5,7.5H18.5" stroke="#5a5a5a" stroke-width=".9"/><g fill="#3ad4ec"><polygon points="7.2,4.5 10.9,9.2 3.5,9.2"/><polygon points="7.2,19.7 10.9,15 3.5,15"/><polygon points="0.8,12.1 5.2,8.6 5.2,15.6"/><polygon points="13.6,12.1 9.2,8.6 9.2,15.6"/></g></svg>
<span class="t" style="left:356px;top:741px;">Game Navigation</span>
<div class="btn" style="left:496px;top:734px;width:78px;height:24px;"></div>
<span class="t c" style="left:385px;width:300px;top:741px;">Layouts</span>
<div class="btn" style="left:578px;top:734px;width:79px;height:24px;"></div>
<svg style="left:580px;top:741px" width="17" height="12" viewBox="0 0 17 12"><rect x=".5" y=".5" width="16" height="11" fill="#6f9c83" stroke="#2e2e2e"/><rect x="1" y="7" width="15" height="4" fill="#a4a4b4"/><rect x="1" y="6" width="15" height="1" fill="#2e2e2e"/></svg>
<span class="t" style="left:600px;top:741px;">Time</span>
<div class="btn" style="left:660px;top:734px;width:158px;height:24px;"></div>
<div class="or" style="left:661px;top:735px;width:76px;height:22px;border-radius:5px 0 0 5px;"></div>
<svg style="left:662px;top:741px" width="17" height="12" viewBox="0 0 17 12"><rect x=".5" y=".5" width="16" height="11" fill="#6f9c83" stroke="#2e2e2e"/><rect x="1" y="7" width="15" height="4" fill="#a4a4b4"/><rect x="1" y="6" width="15" height="1" fill="#2e2e2e"/></svg>
<span class="t" style="left:682px;top:741px;color:#000;">Schematic</span>
<svg style="left:741px;top:741px" width="17" height="12" viewBox="0 0 17 12"><rect x=".5" y=".5" width="16" height="11" fill="#6f9c83" stroke="#2e2e2e"/><rect x="1" y="7" width="15" height="4" fill="#a4a4b4"/><rect x="1" y="6" width="15" height="1" fill="#2e2e2e"/></svg>
<span class="t" style="left:761px;top:741px;">UV View</span>
<div class="btn or" style="left:821px;top:734px;width:78px;height:24px;"></div>
<svg style="left:823px;top:741px" width="17" height="12" viewBox="0 0 17 12"><rect x=".5" y=".5" width="16" height="11" fill="#6f9c83" stroke="#2e2e2e"/><rect x="8" y="1" width="3" height="10" fill="#a4a4b4"/><rect x="12" y="1" width="4" height="10" fill="#a4a4b4"/><rect x="7" y="1" width="1" height="10" fill="#2e2e2e"/><rect x="11" y="1" width="1" height="10" fill="#2e2e2e"/></svg>
<span class="t" style="left:843px;top:741px;color:#000;">Preview</span>
<div class="btn" style="left:1187px;top:734px;width:80px;height:24px;"></div>
<svg style="left:1190px;top:738px" width="18" height="17" viewBox="0 0 18 17"><rect x="4.5" y=".5" width="13" height="10" fill="#5b5b5b" stroke="#c0c0c0"/><rect x=".5" y="5.5" width="12" height="10" fill="#5b5b5b" stroke="#c0c0c0" transform="rotate(-6 6 10)"/></svg>
<span class="t" style="left:1210px;top:741px;">Palettes</span>
<svg style="left:1262px;top:753px" width="3" height="3" viewBox="0 0 3 3"><rect x="0" y="0" width="3" height="3" fill="none" stroke="#2a2a2a" stroke-width="1"/></svg>
<div class="btn or" style="left:1270px;top:734px;width:120px;height:24px;"></div>
<svg style="left:1272px;top:741px" width="17" height="12" viewBox="0 0 17 12"><rect x=".5" y=".5" width="16" height="11" fill="#6f9c83" stroke="#2e2e2e"/><rect x="12.5" y="1" width="3.5" height="10" fill="#a4a4b4"/><rect x="11.5" y="1" width="1" height="10" fill="#2e2e2e"/></svg>
<span class="t" style="left:1292px;top:741px;color:#000;">Items and Shading</span>
<div style="left:476px;top:767px;width:1px;height:25px;background:#2e2e2e;"></div>
<span class="t" style="left:483px;top:771px;color:#d8d8d8;">Left Click: Select Channel<i style="display:inline-block;width:8px;height:8px;border-radius:4px;background:#d0d0d0;margin:0 4px -1px 3px;"></i>Left Double Click: Select Related Channels<i style="display:inline-block;width:8px;height:8px;border-radius:4px;background:#d0d0d0;margin:0 4px -1px 3px;"></i>Right Click: Channels Menu (popup menu)<i style="display:inline-block;width:8px;height:8px;border-radius:4px;background:#d0d0d0;margin:0 4px -1px 3px;"></i> [Any Key]-[Any Button] Click: Click<i style="display:inline-block;width:8px;height:8px;border-radius:4px;background:#d0d0d0;margin:0 4px -1px 3px;"></i> [Any Key]-[Any Button] Click...</span>
<!-- CALLOUTS -->
<svg style="left:54px;top:239px" width="164" height="159" viewBox="0 0 164 159"><defs><linearGradient id="cg60340" x1="0" y1="0" x2="0" y2="1"><stop offset="0.635" stop-color="#fff"/><stop offset="0.792" stop-color="#fdfdfd"/><stop offset="0.950" stop-color="#f0f0f0"/></linearGradient></defs><path d="M17,101 L58.0,101 L78.0,6.0 L94.0,101 L145,101 Q156,101 156,112 L156,140 Q156,151 145,151 L17,151 Q6,151 6,140 L6,112 Q6,101 17,101Z" transform="translate(2.5,2.5)" fill="rgba(120,120,120,.32)" stroke="rgba(120,120,120,.12)" stroke-width="2"/><path d="M17,101 L58.0,101 L78.0,6.0 L94.0,101 L145,101 Q156,101 156,112 L156,140 Q156,151 145,151 L17,151 Q6,151 6,140 L6,112 Q6,101 17,101Z" fill="url(#cg60340)" stroke="#f3a623" stroke-width="1.15" stroke-linejoin="round"/></svg>
<div class="jp" style="left:40px;top:355px;width:190px;height:22px;line-height:22px;font-size:21px;transform:scaleX(.785);letter-spacing:0px;font-family:IPAGothic,'Noto Sans CJK JP',sans-serif;">ツールパネル</div>
<svg style="left:374px;top:224px" width="164" height="107" viewBox="0 0 164 107"><defs><linearGradient id="cg380230" x1="0" y1="0" x2="0" y2="1"><stop offset="0.056" stop-color="#fff"/><stop offset="0.290" stop-color="#fdfdfd"/><stop offset="0.523" stop-color="#f0f0f0"/></linearGradient></defs><path d="M17,6 L145,6 Q156,6 156,17 L156,45 Q156,56 145,56 L94.0,56 L79.5,99.0 L58.5,56 L17,56 Q6,56 6,45 L6,17 Q6,6 17,6Z" transform="translate(2.5,2.5)" fill="rgba(120,120,120,.32)" stroke="rgba(120,120,120,.12)" stroke-width="2"/><path d="M17,6 L145,6 Q156,6 156,17 L156,45 Q156,56 145,56 L94.0,56 L79.5,99.0 L58.5,56 L17,56 Q6,56 6,45 L6,17 Q6,6 17,6Z" fill="url(#cg380230)" stroke="#f3a623" stroke-width="1.15" stroke-linejoin="round"/></svg>
<div class="jp" style="left:369px;top:245px;width:190px;height:22px;line-height:22px;font-size:21px;transform:scaleX(.785);letter-spacing:0px;font-family:IPAGothic,'Noto Sans CJK JP',sans-serif;">ビ<i style="font-style:normal;margin-left:-5px;margin-right:-5px;">ュ</i>ーポート</div>
<span style="left:397px;top:244px;height:22px;line-height:22px;font-family:'Liberation Sans',sans-serif;font-size:17.5px;color:#000;-webkit-text-stroke:.35px #000;">3D</span>
<svg style="left:714px;top:274px" width="144" height="95" viewBox="0 0 144 95"><defs><linearGradient id="cg720280" x1="0" y1="0" x2="0" y2="1"><stop offset="0.063" stop-color="#fff"/><stop offset="0.332" stop-color="#fdfdfd"/><stop offset="0.600" stop-color="#f0f0f0"/></linearGradient></defs><path d="M17,6 L125,6 Q136,6 136,17 L136,46 Q136,57 125,57 L81.0,57 L93.5,87.0 L50.0,57 L17,57 Q6,57 6,46 L6,17 Q6,6 17,6Z" transform="translate(2.5,2.5)" fill="rgba(120,120,120,.32)" stroke="rgba(120,120,120,.12)" stroke-width="2"/><path d="M17,6 L125,6 Q136,6 136,17 L136,46 Q136,57 125,57 L81.0,57 L93.5,87.0 L50.0,57 L17,57 Q6,57 6,46 L6,17 Q6,6 17,6Z" fill="url(#cg720280)" stroke="#f3a623" stroke-width="1.15" stroke-linejoin="round"/></svg>
<div class="jp" style="left:700px;top:284px;width:170px;height:22px;line-height:22px;font-size:21px;transform:scaleX(.785);letter-spacing:0px;font-family:IPAGothic,'Noto Sans CJK JP',sans-serif;">ビ<i style="font-style:normal;margin-left:-5px;margin-right:-5px;">ュ</i>ーポートのプ</div>
<div class="jp" style="left:700px;top:306px;width:170px;height:22px;line-height:22px;font-size:21px;transform:scaleX(.785);letter-spacing:0px;font-family:IPAGothic,'Noto Sans CJK JP',sans-serif;">レビ<i style="font-style:normal;margin-left:-5px;margin-right:-5px;">ュ</i>ー</div>
<svg style="left:1115px;top:322px" width="154" height="96.5" viewBox="0 0 154 96.5"><defs><linearGradient id="cg1121328" x1="0" y1="0" x2="0" y2="1"><stop offset="0.062" stop-color="#fff"/><stop offset="0.321" stop-color="#fdfdfd"/><stop offset="0.580" stop-color="#f0f0f0"/></linearGradient></defs><path d="M17,6 L135,6 Q146,6 146,17 L146,45 Q146,56 135,56 L88.0,56 L37.5,88.5 L54.0,56 L17,56 Q6,56 6,45 L6,17 Q6,6 17,6Z" transform="translate(2.5,2.5)" fill="rgba(120,120,120,.32)" stroke="rgba(120,120,120,.12)" stroke-width="2"/><path d="M17,6 L135,6 Q146,6 146,17 L146,45 Q146,56 135,56 L88.0,56 L37.5,88.5 L54.0,56 L17,56 Q6,56 6,45 L6,17 Q6,6 17,6Z" fill="url(#cg1121328)" stroke="#f3a623" stroke-width="1.15" stroke-linejoin="round"/></svg>
<div class="jp" style="left:1101px;top:343px;width:180px;height:22px;line-height:22px;font-size:21px;transform:scaleX(.785);letter-spacing:0px;font-family:IPAGothic,'Noto Sans CJK JP',sans-serif;">プロパテ<i style="font-style:normal;margin-left:-5px;margin-right:-5px;">ィ</i>パネル</div>
<svg style="left:354px;top:454px" width="154" height="93.5" viewBox="0 0 154 93.5"><defs><linearGradient id="cg360460" x1="0" y1="0" x2="0" y2="1"><stop offset="0.064" stop-color="#fff"/><stop offset="0.326" stop-color="#fdfdfd"/><stop offset="0.588" stop-color="#f0f0f0"/></linearGradient></defs><path d="M17,6 L135,6 Q146,6 146,17 L146,44 Q146,55 135,55 L87.5,55 L99.0,85.5 L53.5,55 L17,55 Q6,55 6,44 L6,17 Q6,6 17,6Z" transform="translate(2.5,2.5)" fill="rgba(120,120,120,.32)" stroke="rgba(120,120,120,.12)" stroke-width="2"/><path d="M17,6 L135,6 Q146,6 146,17 L146,44 Q146,55 135,55 L87.5,55 L99.0,85.5 L53.5,55 L17,55 Q6,55 6,44 L6,17 Q6,6 17,6Z" fill="url(#cg360460)" stroke="#f3a623" stroke-width="1.15" stroke-linejoin="round"/></svg>
<div class="jp" style="left:340px;top:464px;width:180px;height:22px;line-height:22px;font-size:21px;transform:scaleX(.785);letter-spacing:0px;font-family:IPAGothic,'Noto Sans CJK JP',sans-serif;">スケマテ<i style="font-style:normal;margin-left:-5px;margin-right:-5px;">ィ</i>クビ<i style="font-style:normal;margin-left:-5px;margin-right:-5px;">ュ</i>ー</div>
<div class="jp" style="left:340px;top:484px;width:180px;height:22px;line-height:22px;font-size:21px;transform:scaleX(.785);letter-spacing:0px;font-family:IPAGothic,'Noto Sans CJK JP',sans-serif;">ポート</div>
<svg style="left:405px;top:646px" width="155" height="105" viewBox="0 0 155 105"><defs><linearGradient id="cg411652" x1="0" y1="0" x2="0" y2="1"><stop offset="0.057" stop-color="#fff"/><stop offset="0.295" stop-color="#fdfdfd"/><stop offset="0.533" stop-color="#f0f0f0"/></linearGradient></defs><path d="M17,6 L136,6 Q147,6 147,17 L147,45 Q147,56 136,56 L86.5,56 L74.0,97.0 L52.5,56 L17,56 Q6,56 6,45 L6,17 Q6,6 17,6Z" transform="translate(2.5,2.5)" fill="rgba(120,120,120,.32)" stroke="rgba(120,120,120,.12)" stroke-width="2"/><path d="M17,6 L136,6 Q147,6 147,17 L147,45 Q147,56 136,56 L86.5,56 L74.0,97.0 L52.5,56 L17,56 Q6,56 6,45 L6,17 Q6,6 17,6Z" fill="url(#cg411652)" stroke="#f3a623" stroke-width="1.15" stroke-linejoin="round"/></svg>
<div class="jp" style="left:391px;top:667px;width:181px;height:22px;line-height:22px;font-size:21px;transform:scaleX(.785);letter-spacing:0px;font-family:IPAGothic,'Noto Sans CJK JP',sans-serif;">下のツールバー</div>

</body></html>
